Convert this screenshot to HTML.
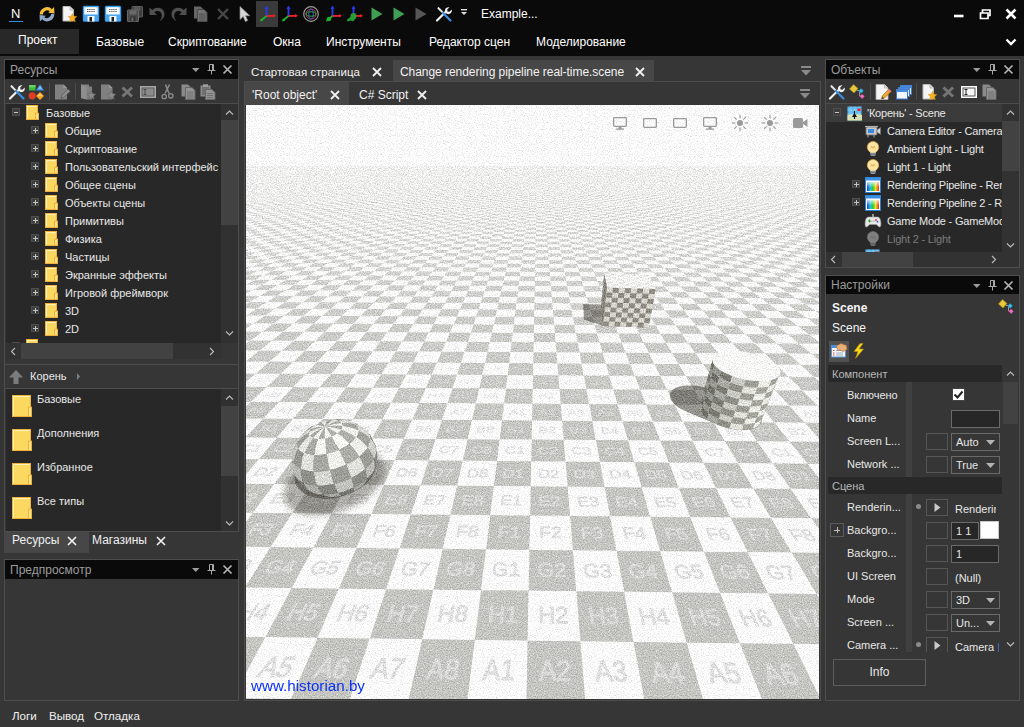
<!DOCTYPE html><html><head><meta charset="utf-8"><title>NeoAxis</title><style>
*{box-sizing:border-box;margin:0;padding:0}
html,body{width:1024px;height:727px;overflow:hidden;background:#363636}
body{position:relative;font-family:"Liberation Sans",sans-serif;font-size:11px;color:#e8e8e8;line-height:1}
.a{position:absolute}
.t{position:absolute;white-space:nowrap;line-height:14px;height:14px}
.s12{font-size:12px}
.panel{position:absolute;border:1px solid #4d4d4d;background:#363636}
.ptitle{position:absolute;left:0;right:0;top:0;height:19px;background:#0a0a0a;color:#9c9c9c;font-size:12px}
.ptitle .t{left:5px;top:2px}
.dark{background:#282828}
.hl{position:absolute;height:1px;background:#4d4d4d}
.vl{position:absolute;width:1px;background:#4d4d4d}
.fold{position:absolute;width:14px;height:16px}
.exp{position:absolute;width:8px;height:8px;border:1px solid #4e4e4e;background:#3d3d3d}
.exp:before{content:"";position:absolute;left:1px;top:2.500px;width:4px;height:1px;background:#c4c4c4}
.exp.plus:before{left:.5px;width:5px}
.exp.plus:after{content:"";position:absolute;left:2.500px;top:.5px;width:1px;height:5px;background:#c4c4c4}
.sb{position:absolute;background:#363636}
.thumb{position:absolute;background:#424242}
svg{position:absolute;overflow:visible}
.box{position:absolute;border:1px solid #565656;background:#363636}
.tb{position:absolute;border:1px solid #6a6a6a;background:#272727}
</style></head><body>
<svg width="0" height="0" style="left:0;top:0"><defs><linearGradient id="rb" x1="0" y1="0" x2="1" y2="0"><stop offset="0" stop-color="#2438e8"/><stop offset=".28" stop-color="#20c8d0"/><stop offset=".5" stop-color="#30c838"/><stop offset=".72" stop-color="#f0e020"/><stop offset="1" stop-color="#e82828"/></linearGradient><linearGradient id="wb" x1="0" y1="0" x2="0" y2="1"><stop offset="0" stop-color="#fff" stop-opacity=".75"/><stop offset=".6" stop-color="#fff" stop-opacity="0"/></linearGradient></defs></svg>
<div class="a" style="left:0;top:0;width:1024px;height:56px;background:#0a0a0a"></div>
<div class="t" style="left:11px;top:6px;font-size:13px;color:#fff;line-height:15px;height:15px">N</div>
<div class="a" style="left:9px;top:21px;width:14px;height:1px;background:#2f8de4"></div>
<div class="a" style="left:256px;top:1px;width:22px;height:26px;background:#3a3a3a"></div>
<svg style="left:39px;top:6px" width="16" height="16" viewBox="0 0 16 16"><path d="M2.300 8.500a5.700 5.700 0 0 1 9.800-4" stroke="#f5bd3a" stroke-width="3.200" fill="none"/><path d="M9.200 6.800l6.300.7-.4-6.500z" fill="#f5bd3a"/><path d="M13.700 8a5.700 5.700 0 0 1-9.800 4" stroke="#8fa9c8" stroke-width="3.200" fill="none"/><path d="M6.800 9.700l-6.300-.7.400 6.500z" fill="#8fa9c8"/></svg>
<svg style="left:61px;top:6px" width="16" height="16" viewBox="0 0 16 16"><path d="M2 .5h7l3.500 3.500v11h-10.500z" fill="#f4f4f4" stroke="#b8b8b8"/><path d="M9 .5v3.500h3.500" fill="#dcdcdc" stroke="#b8b8b8"/><path d="M11.500 7.500l1.300 2.700 3 .4-2.200 2.100.6 3-2.700-1.500-2.700 1.500.6-3-2.200-2.100 3-.4z" fill="#f7b322" stroke="#d98c10" stroke-width=".5"/></svg>
<svg style="left:83px;top:6px" width="16" height="16" viewBox="0 0 16 16"><rect x=".5" y=".5" width="15" height="14.500" rx=".8" fill="#eaf4fd" stroke="#3a9be8" stroke-width="1.400"/><rect x="1" y="8.500" width="14" height="6.500" fill="#4aa6ee"/><rect x="3" y="1.500" width="10" height="6" fill="#ffffff"/><path d="M4 3.500h8M4 5.500h8" stroke="#666" stroke-width="1" stroke-dasharray="1.500 .6"/><rect x="4.500" y="10" width="7" height="5.500" fill="#f4f8fc"/><rect x="6.500" y="11" width="2.500" height="4.500" fill="#222"/></svg>
<svg style="left:105px;top:6px" width="16" height="16" viewBox="0 0 16 16"><rect x=".5" y=".5" width="15" height="14.500" rx=".8" fill="#eaf4fd" stroke="#3a9be8" stroke-width="1.400"/><rect x="1" y="8.500" width="14" height="6.500" fill="#4aa6ee"/><rect x="3" y="1.500" width="10" height="6" fill="#ffffff"/><path d="M4 3.500h8M4 5.500h8" stroke="#666" stroke-width="1" stroke-dasharray="1.500 .6"/><rect x="4.500" y="10" width="7" height="5.500" fill="#f4f8fc"/><rect x="6.500" y="11" width="2.500" height="4.500" fill="#222"/></svg>
<svg style="left:127px;top:6px" width="16" height="16" viewBox="0 0 16 16"><rect x="5" y=".5" width="10.500" height="10.500" rx=".6" fill="#3e3e3e" stroke="#5e5e5e"/><rect x="7" y="1" width="6.500" height="3.500" fill="#585858"/><rect x=".5" y="4" width="11" height="11.500" rx=".6" fill="#4a4a4a" stroke="#6a6a6a"/><rect x="2.500" y="4.500" width="7" height="4" fill="#6a6a6a"/><rect x="3.500" y="10.500" width="5" height="5" fill="#2e2e2e"/><rect x="4.500" y="11.500" width="1.800" height="4" fill="#6a6a6a"/></svg>
<svg style="left:149px;top:6px" width="16" height="16" viewBox="0 0 16 16"><path d="M.5 1.500v7.500h7.500l-2.700-2.700c1-.8 2-1.200 3.200-1.200 2.700 0 4.300 2.100 4.300 4.600 0 2.200-.9 4-2.600 5.600 3.400-1.400 5.300-4 5.300-7 0-3.800-2.900-6.500-6.700-6.500-2.100 0-4 .8-5.500 2.200z" fill="#505050"/></svg>
<svg style="left:171px;top:6px" width="16" height="16" viewBox="0 0 16 16"><g transform="translate(16,0) scale(-1,1)"><path d="M.5 1.500v7.500h7.500l-2.700-2.700c1-.8 2-1.200 3.200-1.200 2.700 0 4.300 2.100 4.300 4.600 0 2.200-.9 4-2.600 5.600 3.400-1.400 5.300-4 5.300-7 0-3.800-2.900-6.500-6.700-6.500-2.100 0-4 .8-5.500 2.200z" fill="#505050"/></g></svg>
<svg style="left:193px;top:6px" width="16" height="16" viewBox="0 0 16 16"><path d="M1 .5h6.500l2.500 2.500v9.500h-9z" fill="#666"/><path d="M4.500 3.500h6.500l3 3v9h-9.500z" fill="#747474" stroke="#4a4a4a"/><path d="M6 8h6.500M6 10h6.500M6 12h6.500M6 14h6.500" stroke="#4c4c4c" stroke-width=".9"/></svg>
<svg style="left:215px;top:6px" width="16" height="16" viewBox="0 0 16 16"><path d="M3 3l10 10M13 3l-10 10" stroke="#484848" stroke-width="2.400"/></svg>
<svg style="left:237px;top:6px" width="16" height="16" viewBox="0 0 16 16"><path d="M3 .5v13l3.200-3 2.200 5 2.300-1-2.200-4.800h4.300z" fill="#d6d6d6" stroke="#8c8c8c" stroke-width=".7"/></svg>
<svg style="left:260px;top:6px" width="16" height="16" viewBox="0 0 16 16"><path d="M6.500 10v-9.500" stroke="#2a3cf0" stroke-width="1.800"/><path d="M6.500 10l8 -.2" stroke="#e8202a" stroke-width="1.800"/><path d="M6.500 10l-5.500 4.500" stroke="#20b030" stroke-width="1.800"/><path d="M6.500 0l-2 3h4z" fill="#2a3cf0"/><path d="M16 9.700l-3-1.800v3.600z" fill="#e8202a"/><path d="M0 15.500l1-3.300 2.300 2.300z" fill="#20b030"/></svg>
<svg style="left:282px;top:6px" width="16" height="16" viewBox="0 0 16 16"><path d="M6.500 10v-9.500" stroke="#2a3cf0" stroke-width="1.800"/><path d="M6.500 10l8 -.2" stroke="#e8202a" stroke-width="1.800"/><path d="M6.500 10l-5.500 4.500" stroke="#20b030" stroke-width="1.800"/><path d="M6.500 0l-2 3h4z" fill="#2a3cf0"/><path d="M16 9.700l-3-1.800v3.600z" fill="#e8202a"/><path d="M0 15.500l1-3.300 2.300 2.300z" fill="#20b030"/></svg>
<svg style="left:303px;top:6px" width="16" height="16" viewBox="0 0 16 16"><circle cx="8" cy="8" r="7.300" fill="none" stroke="#9a9a9a" stroke-width="1.200"/><circle cx="8" cy="8" r="5" fill="none" stroke="#c03040" stroke-width="1"/><ellipse cx="8" cy="8" rx="2.200" ry="5" fill="none" stroke="#3058d8" stroke-width="1"/><ellipse cx="8" cy="8" rx="5" ry="2.200" fill="none" stroke="#30a040" stroke-width="1"/></svg>
<svg style="left:326px;top:6px" width="16" height="16" viewBox="0 0 16 16"><path d="M6.500 10v-9.500" stroke="#2a3cf0" stroke-width="1.800"/><path d="M6.500 10l8 -.2" stroke="#e8202a" stroke-width="1.800"/><path d="M6.500 10l-5.500 4.500" stroke="#20b030" stroke-width="1.800"/><path d="M6.500 0l-2 3h4z" fill="#2a3cf0"/><path d="M16 9.700l-3-1.800v3.600z" fill="#e8202a"/><path d="M0 15.500l1-3.300 2.300 2.300z" fill="#20b030"/><circle cx="3" cy="13" r="2.200" fill="#20b030"/></svg>
<svg style="left:347px;top:6px" width="16" height="16" viewBox="0 0 16 16"><path d="M6.500 10v-9.500" stroke="#2a3cf0" stroke-width="1.800"/><path d="M6.500 10l8 -.2" stroke="#e8202a" stroke-width="1.800"/><path d="M6.500 10l-5.500 4.500" stroke="#20b030" stroke-width="1.800"/><path d="M6.500 0l-2 3h4z" fill="#2a3cf0"/><path d="M16 9.700l-3-1.800v3.600z" fill="#e8202a"/><path d="M0 15.500l1-3.300 2.300 2.300z" fill="#20b030"/><path d="M1 13.500l4-4 4 2.500-3 3.500z" fill="#20a030"/><circle cx="6.500" cy="10" r="3" fill="#2c9c38"/></svg>
<svg style="left:369px;top:6px" width="16" height="16" viewBox="0 0 16 16"><path d="M2.500 1.500l11 6.500-11 6.500z" fill="#3fa055"/></svg>
<svg style="left:391px;top:6px" width="16" height="16" viewBox="0 0 16 16"><path d="M2.500 1.500l11 6.500-11 6.500z" fill="#3fa055"/></svg>
<svg style="left:413px;top:6px" width="16" height="16" viewBox="0 0 16 16"><path d="M2.500 1.500l11 6.500-11 6.500z" fill="#565656"/></svg>
<svg style="left:436px;top:6px" width="16" height="16" viewBox="0 0 16 16"><path d="M1 14.500l8-8" stroke="#f2f2f2" stroke-width="2.200" stroke-linecap="round"/><path d="M9.500 6.500a3.300 3.300 0 0 1 1-4.800c1-.6 2.200-.7 3-.4l-2.300 2.300.3 1.900 1.900.3 2.300-2.300c.3 1 .2 2-.4 3a3.300 3.300 0 0 1-4.800 1z" fill="#f2f2f2"/><path d="M2 1l1 .2 4.500 4.800-1.300 1.300-4.800-4.500z" fill="#e8e8e8"/><path d="M7 7l7.500 7.500" stroke="#3b8fe0" stroke-width="2.200" stroke-linecap="round"/></svg>
<svg style="left:459px;top:8px" width="10" height="10" viewBox="0 0 10 10"><rect x="2" y="1" width="6" height="1.4" fill="#e0e0e0"/><path d="M2 4h6l-3 3z" fill="#e0e0e0"/></svg>
<div class="t s12" style="left:481px;top:7px;color:#fff">Example...</div>
<svg style="left:950px;top:6px" width="70" height="16" viewBox="0 0 70 16"><g stroke="#ffffff" fill="none"><path d="M4 10h9.500" stroke-width="2.600"/><path d="M30.500 7h7.500v5.500h-7.500zM32.500 6.500v-2.500h7.500v5.500h-2" stroke-width="1.700"/><path d="M56.500 3.500l9 9M65.500 3.500l-9 9" stroke-width="2.500"/></g></svg>
<div class="a" style="left:0;top:29px;width:79px;height:25px;background:#282828"></div>
<div class="t s12" style="left:18px;top:33px;color:#fff">Проект</div>
<div class="t s12" style="left:96px;top:35px;color:#fff">Базовые</div>
<div class="t s12" style="left:168px;top:35px;color:#fff">Скриптование</div>
<div class="t s12" style="left:273px;top:35px;color:#fff">Окна</div>
<div class="t s12" style="left:326px;top:35px;color:#fff">Инструменты</div>
<div class="t s12" style="left:429px;top:35px;color:#fff">Редактор сцен</div>
<div class="t s12" style="left:536px;top:35px;color:#fff">Моделирование</div>
<svg style="left:1005px;top:37px" width="12" height="10" viewBox="0 0 12 10"><path d="M1.500 2.500l4.500 4.500 4.500-4.500" stroke="#ffffff" stroke-width="2.300" fill="none"/></svg>
<div class="t" style="left:12px;top:708.500px;color:#f0f0f0;font-size:11.600px">Логи</div>
<div class="t" style="left:49px;top:708.500px;color:#f0f0f0;font-size:11.600px">Вывод</div>
<div class="t" style="left:94px;top:708.500px;color:#f0f0f0;font-size:11.600px">Отладка</div>
<div class="panel" style="left:4px;top:59px;width:235px;height:473px">
<div class="ptitle"><div class="t" style="top:3px">Ресурсы</div><svg style="left:183px;top:0" width="46" height="19" viewBox="0 0 46 19"><path d="M4 8h7.500l-3.750 4z" fill="#9c9c9c"/><path d="M21.500 4.500h4v6h-4zM24.500 4.500v6M19.500 10.500h8M23.500 10.500v4" stroke="#a8a8a8" stroke-width="1" fill="none"/><path d="M35.500 5.500l8 8M43.500 5.500l-8 8" stroke="#b4b4b4" stroke-width="1.700"/></svg></div>
<div class="a" style="left:1px;top:0;width:232px;height:471px">
<svg style="left:3px;top:24px" width="16" height="16" viewBox="0 0 16 16"><path d="M1 14.500l8-8" stroke="#f2f2f2" stroke-width="2.200" stroke-linecap="round"/><path d="M9.500 6.500a3.300 3.300 0 0 1 1-4.800c1-.6 2.200-.7 3-.4l-2.300 2.300.3 1.900 1.900.3 2.300-2.300c.3 1 .2 2-.4 3a3.300 3.300 0 0 1-4.800 1z" fill="#f2f2f2"/><path d="M2 1l1 .2 4.500 4.800-1.300 1.300-4.800-4.500z" fill="#e8e8e8"/><path d="M7 7l7.500 7.500" stroke="#3b8fe0" stroke-width="2.200" stroke-linecap="round"/></svg>
<svg style="left:22px;top:24px" width="16" height="16" viewBox="0 0 16 16"><rect x="1" y="1" width="6.500" height="5.500" rx=".5" fill="#3dbb3d"/><rect x="1" y="1" width="6.500" height="2.500" fill="#66d466"/><path d="M12 .5l4 6h-8z" fill="#3d96ea"/><path d="M12 1.500l2.300 3.500h-4.600z" fill="#7dbcf4"/><circle cx="4.200" cy="11.800" r="3.600" fill="#e03c24"/><path d="M12 8l4 4-4 4-4-4z" fill="#f5a623"/><path d="M12 9.300l2.700 2.700h-5.400z" fill="#ffc860"/></svg>
<svg style="left:48px;top:24px" width="16" height="16" viewBox="0 0 16 16"><path d="M1 .5h8.500l3.500 3.500v11.500h-12z" fill="#808080"/><path d="M9.500 .5v3.500h3.500" fill="#9a9a9a"/><path d="M7 14.500l1-3.500 6-6 2.200 2.200-6 6z" fill="#8c8c8c" stroke="#5a5a5a" stroke-width=".8"/></svg>
<svg style="left:74px;top:24px" width="16" height="16" viewBox="0 0 16 16"><path d="M1 .5h8v2h3v13h-5.500l-5.500-1.500z" fill="#808080"/><path d="M1 .5l5.500 2v13l-5.500-1.500z" fill="#8e8e8e"/><path d="M11.500 7l1.300 2.700 3 .4-2.200 2.100.6 3-2.700-1.500-2.700 1.500.6-3-2.200-2.100 3-.4z" fill="#8a8a8a" stroke="#5c5c5c" stroke-width=".5"/></svg>
<svg style="left:94px;top:24px" width="16" height="16" viewBox="0 0 16 16"><path d="M1 .5h8l3.500 3.500v11.500h-11.500z" fill="#808080"/><path d="M9 .5v3.500h3.500" fill="#9a9a9a"/><path d="M11.500 7l1.300 2.700 3 .4-2.200 2.100.6 3-2.700-1.500-2.700 1.500.6-3-2.200-2.100 3-.4z" fill="#8a8a8a" stroke="#5c5c5c" stroke-width=".5"/></svg>
<svg style="left:114px;top:24px" width="16" height="16" viewBox="0 0 16 16"><path d="M2.500 3.500l9.500 9M12 3.500l-9.500 9" stroke="#757575" stroke-width="3"/></svg>
<svg style="left:134px;top:24px" width="16" height="16" viewBox="0 0 16 16"><rect x=".7" y="2.700" width="14.600" height="10.600" fill="#8a8a8a" stroke="#a8a8a8" stroke-width="1.400"/><rect x="2" y="4" width="12" height="8" fill="none" stroke="#555" stroke-width=".7"/><path d="M3.500 5.500h3M3.500 10.500h3M5 5.500v5" stroke="#444" stroke-width=".9" fill="none"/></svg>
<svg style="left:154px;top:24px" width="16" height="16" viewBox="0 0 16 16"><path d="M5.500 .5l3.500 9M9.500 .5l-4.500 9" stroke="#8c8c8c" stroke-width="1.500" fill="none"/><circle cx="4.200" cy="12.500" r="2.200" fill="none" stroke="#8c8c8c" stroke-width="1.300"/><circle cx="10.800" cy="11.800" r="2.200" fill="none" stroke="#8c8c8c" stroke-width="1.300"/></svg>
<svg style="left:175px;top:24px" width="16" height="16" viewBox="0 0 16 16"><path d="M.5 .5h6.500l2.500 2.500v9.500h-9z" fill="#8a8a8a"/><path d="M4.500 3.500h6.500l3 3v9h-9.500z" fill="#949494" stroke="#666"/><path d="M6 8h6.500M6 10h6.500M6 12h6.500M6 14h6.500" stroke="#6a6a6a" stroke-width=".9"/></svg>
<svg style="left:194px;top:24px" width="16" height="16" viewBox="0 0 16 16"><rect x=".5" y="1.500" width="10" height="11" fill="#8a8a8a"/><rect x="3" y=".3" width="5" height="2.500" fill="#a0a0a0"/><rect x="2" y="3" width="7" height="8" fill="#707070"/><path d="M5.500 5.500h6.500l3 3v7h-9.500z" fill="#949494" stroke="#666"/><path d="M7 9.500h6M7 11.500h6M7 13.500h6" stroke="#6a6a6a" stroke-width=".9"/></svg>
<div class="a" style="left:43px;top:23px;width:1px;height:17px;background:#4a4a4a"></div>
<div class="a" style="left:69px;top:23px;width:1px;height:17px;background:#4a4a4a"></div>
<div class="hl" style="left:-1px;right:0;top:43px"></div>
<div class="a dark" style="left:0;top:44px;width:215px;height:239px;overflow:hidden">
<div class="exp" style="left:6px;top:4px"></div>
<svg style="left:20px;top:1px" width="13" height="15" viewBox="0 0 13 15"><rect x=".5" y=".5" width="11" height="14" fill="#fbd860" stroke="#eeb23c"/><path d="M1.500 13.5v-12h9" stroke="#fff3c0" fill="none"/><rect x="9.5" y="8.2" width="3" height="6.2" fill="#fce48c" stroke="#eeb23c"/></svg>
<div class="t" style="left:40px;top:2px">Базовые</div>
<div class="exp plus" style="left:25px;top:22px"></div>
<svg style="left:39px;top:19px" width="13" height="15" viewBox="0 0 13 15"><rect x=".5" y=".5" width="11" height="14" fill="#fbd860" stroke="#eeb23c"/><path d="M1.500 13.5v-12h9" stroke="#fff3c0" fill="none"/><rect x="9.5" y="8.2" width="3" height="6.2" fill="#fce48c" stroke="#eeb23c"/></svg>
<div class="t" style="left:59px;top:20px">Общие</div>
<div class="exp plus" style="left:25px;top:40px"></div>
<svg style="left:39px;top:37px" width="13" height="15" viewBox="0 0 13 15"><rect x=".5" y=".5" width="11" height="14" fill="#fbd860" stroke="#eeb23c"/><path d="M1.500 13.5v-12h9" stroke="#fff3c0" fill="none"/><rect x="9.5" y="8.2" width="3" height="6.2" fill="#fce48c" stroke="#eeb23c"/></svg>
<div class="t" style="left:59px;top:38px">Скриптование</div>
<div class="exp plus" style="left:25px;top:58px"></div>
<svg style="left:39px;top:55px" width="13" height="15" viewBox="0 0 13 15"><rect x=".5" y=".5" width="11" height="14" fill="#fbd860" stroke="#eeb23c"/><path d="M1.500 13.5v-12h9" stroke="#fff3c0" fill="none"/><rect x="9.5" y="8.2" width="3" height="6.2" fill="#fce48c" stroke="#eeb23c"/></svg>
<div class="t" style="left:59px;top:56px">Пользовательский интерфейс</div>
<div class="exp plus" style="left:25px;top:76px"></div>
<svg style="left:39px;top:73px" width="13" height="15" viewBox="0 0 13 15"><rect x=".5" y=".5" width="11" height="14" fill="#fbd860" stroke="#eeb23c"/><path d="M1.500 13.5v-12h9" stroke="#fff3c0" fill="none"/><rect x="9.5" y="8.2" width="3" height="6.2" fill="#fce48c" stroke="#eeb23c"/></svg>
<div class="t" style="left:59px;top:74px">Общее сцены</div>
<div class="exp plus" style="left:25px;top:94px"></div>
<svg style="left:39px;top:91px" width="13" height="15" viewBox="0 0 13 15"><rect x=".5" y=".5" width="11" height="14" fill="#fbd860" stroke="#eeb23c"/><path d="M1.500 13.5v-12h9" stroke="#fff3c0" fill="none"/><rect x="9.5" y="8.2" width="3" height="6.2" fill="#fce48c" stroke="#eeb23c"/></svg>
<div class="t" style="left:59px;top:92px">Объекты сцены</div>
<div class="exp plus" style="left:25px;top:112px"></div>
<svg style="left:39px;top:109px" width="13" height="15" viewBox="0 0 13 15"><rect x=".5" y=".5" width="11" height="14" fill="#fbd860" stroke="#eeb23c"/><path d="M1.500 13.5v-12h9" stroke="#fff3c0" fill="none"/><rect x="9.5" y="8.2" width="3" height="6.2" fill="#fce48c" stroke="#eeb23c"/></svg>
<div class="t" style="left:59px;top:110px">Примитивы</div>
<div class="exp plus" style="left:25px;top:130px"></div>
<svg style="left:39px;top:127px" width="13" height="15" viewBox="0 0 13 15"><rect x=".5" y=".5" width="11" height="14" fill="#fbd860" stroke="#eeb23c"/><path d="M1.500 13.5v-12h9" stroke="#fff3c0" fill="none"/><rect x="9.5" y="8.2" width="3" height="6.2" fill="#fce48c" stroke="#eeb23c"/></svg>
<div class="t" style="left:59px;top:128px">Физика</div>
<div class="exp plus" style="left:25px;top:148px"></div>
<svg style="left:39px;top:145px" width="13" height="15" viewBox="0 0 13 15"><rect x=".5" y=".5" width="11" height="14" fill="#fbd860" stroke="#eeb23c"/><path d="M1.500 13.5v-12h9" stroke="#fff3c0" fill="none"/><rect x="9.5" y="8.2" width="3" height="6.2" fill="#fce48c" stroke="#eeb23c"/></svg>
<div class="t" style="left:59px;top:146px">Частицы</div>
<div class="exp plus" style="left:25px;top:166px"></div>
<svg style="left:39px;top:163px" width="13" height="15" viewBox="0 0 13 15"><rect x=".5" y=".5" width="11" height="14" fill="#fbd860" stroke="#eeb23c"/><path d="M1.500 13.5v-12h9" stroke="#fff3c0" fill="none"/><rect x="9.5" y="8.2" width="3" height="6.2" fill="#fce48c" stroke="#eeb23c"/></svg>
<div class="t" style="left:59px;top:164px">Экранные эффекты</div>
<div class="exp plus" style="left:25px;top:184px"></div>
<svg style="left:39px;top:181px" width="13" height="15" viewBox="0 0 13 15"><rect x=".5" y=".5" width="11" height="14" fill="#fbd860" stroke="#eeb23c"/><path d="M1.500 13.5v-12h9" stroke="#fff3c0" fill="none"/><rect x="9.5" y="8.2" width="3" height="6.2" fill="#fce48c" stroke="#eeb23c"/></svg>
<div class="t" style="left:59px;top:182px">Игровой фреймворк</div>
<div class="exp plus" style="left:25px;top:202px"></div>
<svg style="left:39px;top:199px" width="13" height="15" viewBox="0 0 13 15"><rect x=".5" y=".5" width="11" height="14" fill="#fbd860" stroke="#eeb23c"/><path d="M1.500 13.5v-12h9" stroke="#fff3c0" fill="none"/><rect x="9.5" y="8.2" width="3" height="6.2" fill="#fce48c" stroke="#eeb23c"/></svg>
<div class="t" style="left:59px;top:200px">3D</div>
<div class="exp plus" style="left:25px;top:220px"></div>
<svg style="left:39px;top:217px" width="13" height="15" viewBox="0 0 13 15"><rect x=".5" y=".5" width="11" height="14" fill="#fbd860" stroke="#eeb23c"/><path d="M1.500 13.5v-12h9" stroke="#fff3c0" fill="none"/><rect x="9.5" y="8.2" width="3" height="6.2" fill="#fce48c" stroke="#eeb23c"/></svg>
<div class="t" style="left:59px;top:218px">2D</div>
<div class="exp" style="left:6px;top:238px"></div>
<svg style="left:20px;top:235px" width="13" height="15" viewBox="0 0 13 15"><rect x=".5" y=".5" width="11" height="14" fill="#fbd860" stroke="#eeb23c"/><path d="M1.500 13.5v-12h9" stroke="#fff3c0" fill="none"/><rect x="9.5" y="8.2" width="3" height="6.2" fill="#fce48c" stroke="#eeb23c"/></svg>
<div class="t" style="left:40px;top:236px"></div>
</div>
<div class="sb" style="left:215px;top:44px;width:17px;height:239px;background:#313131"><div class="thumb" style="left:0;top:16px;width:17px;height:105px"></div><svg style="left:4px;top:4px" width="9" height="9" viewBox="0 0 9 9"><path d="M1 6.500l3.500-3.500 3.500 3.500" stroke="#bdbdbd" stroke-width="1.100" fill="none"/></svg><svg style="left:4px;top:225px" width="9" height="9" viewBox="0 0 9 9"><path d="M1 2.500l3.500 3.500 3.500-3.500" stroke="#bdbdbd" stroke-width="1.100" fill="none"/></svg></div>
<div class="sb" style="left:0;top:283px;width:215px;height:16px;background:#323232"><div class="thumb" style="left:15px;top:0;width:152px;height:16px"></div><svg style="left:3px;top:4px" width="9" height="9" viewBox="0 0 9 9"><path d="M6 1l-3.500 3.500 3.500 3.500" stroke="#bdbdbd" stroke-width="1.100" fill="none"/></svg><svg style="left:201px;top:4px" width="9" height="9" viewBox="0 0 9 9"><path d="M3 1l3.500 3.500-3.500 3.500" stroke="#bdbdbd" stroke-width="1.100" fill="none"/></svg></div>
<div class="hl" style="left:-1px;right:0;top:304px"></div>
<svg style="left:2px;top:309px" width="16" height="16" viewBox="0 0 16 16"><path d="M8 1l7 7.500h-4.500v6.500h-5v-6.500h-4.500z" fill="#7c7c7c"/></svg>
<div class="t" style="left:24px;top:309px">Корень</div>
<svg style="left:70px;top:313px" width="5" height="7" viewBox="0 0 5 7"><path d="M1 0l3 3.500-3 3.500z" fill="#7a8088"/></svg>
<div class="hl" style="left:-1px;right:0;top:328px"></div>
<div class="a dark" style="left:0;top:329px;width:215px;height:142px;overflow:hidden">
<svg style="left:6px;top:6px" width="20" height="22" viewBox="0 0 20 22"><rect x=".5" y=".5" width="18" height="21" fill="#fbd860" stroke="#eeb23c"/><path d="M1.500 20.5v-19h16" stroke="#fff3c0" fill="none"/><rect x="16.5" y="12.1" width="3" height="9.4" fill="#fce48c" stroke="#eeb23c"/></svg>
<div class="t" style="left:31px;top:3px">Базовые</div>
<svg style="left:6px;top:40px" width="20" height="22" viewBox="0 0 20 22"><rect x=".5" y=".5" width="18" height="21" fill="#fbd860" stroke="#eeb23c"/><path d="M1.500 20.5v-19h16" stroke="#fff3c0" fill="none"/><rect x="16.5" y="12.1" width="3" height="9.4" fill="#fce48c" stroke="#eeb23c"/></svg>
<div class="t" style="left:31px;top:37px">Дополнения</div>
<svg style="left:6px;top:74px" width="20" height="22" viewBox="0 0 20 22"><rect x=".5" y=".5" width="18" height="21" fill="#fbd860" stroke="#eeb23c"/><path d="M1.500 20.5v-19h16" stroke="#fff3c0" fill="none"/><rect x="16.5" y="12.1" width="3" height="9.4" fill="#fce48c" stroke="#eeb23c"/></svg>
<div class="t" style="left:31px;top:71px">Избранное</div>
<svg style="left:6px;top:108px" width="20" height="22" viewBox="0 0 20 22"><rect x=".5" y=".5" width="18" height="21" fill="#fbd860" stroke="#eeb23c"/><path d="M1.500 20.5v-19h16" stroke="#fff3c0" fill="none"/><rect x="16.5" y="12.1" width="3" height="9.4" fill="#fce48c" stroke="#eeb23c"/></svg>
<div class="t" style="left:31px;top:105px">Все типы</div>
<svg style="left:6px;top:142px" width="20" height="22" viewBox="0 0 20 22"><rect x=".5" y=".5" width="18" height="21" fill="#fbd860" stroke="#eeb23c"/><path d="M1.500 20.5v-19h16" stroke="#fff3c0" fill="none"/><rect x="16.5" y="12.1" width="3" height="9.4" fill="#fce48c" stroke="#eeb23c"/></svg>
<div class="t" style="left:31px;top:139px"></div>
</div>
<div class="sb" style="left:215px;top:329px;width:17px;height:142px;background:#313131"><div class="thumb" style="left:0;top:17px;width:17px;height:70px"></div><svg style="left:4px;top:4px" width="9" height="9" viewBox="0 0 9 9"><path d="M1 6.500l3.500-3.500 3.500 3.500" stroke="#bdbdbd" stroke-width="1.100" fill="none"/></svg><svg style="left:4px;top:130px" width="9" height="9" viewBox="0 0 9 9"><path d="M1 2.500l3.500 3.500 3.500-3.500" stroke="#bdbdbd" stroke-width="1.100" fill="none"/></svg></div>
</div></div>
<div class="a" style="left:4px;top:532px;width:85px;height:21px;background:#474747"></div>
<div class="t s12" style="left:12px;top:533px;color:#f0f0f0">Ресурсы</div><svg style="left:67px;top:536px" width="10" height="10" viewBox="0 0 10 10"><path d="M1 1l8 8M9 1l-8 8" stroke="#f0f0f0" stroke-width="1.700"/></svg>
<div class="t s12" style="left:92px;top:533px;color:#f0f0f0">Магазины</div><svg style="left:156px;top:536px" width="10" height="10" viewBox="0 0 10 10"><path d="M1 1l8 8M9 1l-8 8" stroke="#f0f0f0" stroke-width="1.700"/></svg>
<div class="panel" style="left:4px;top:559px;width:235px;height:142px">
<div class="ptitle"><div class="t" style="top:3px">Предпросмотр</div><svg style="left:183px;top:0" width="46" height="19" viewBox="0 0 46 19"><path d="M4 8h7.500l-3.750 4z" fill="#9c9c9c"/><path d="M21.500 4.500h4v6h-4zM24.500 4.500v6M19.500 10.500h8M23.500 10.500v4" stroke="#a8a8a8" stroke-width="1" fill="none"/><path d="M35.500 5.500l8 8M43.500 5.500l-8 8" stroke="#b4b4b4" stroke-width="1.700"/></svg></div>
</div>
<div class="a" style="left:393px;top:60px;width:261px;height:22px;background:#474747"></div>
<div class="t" style="left:251px;top:65px;font-size:11.5px;color:#f2f2f2">Стартовая страница</div><svg style="left:372px;top:67px" width="10" height="10" viewBox="0 0 10 10"><path d="M1 1l8 8M9 1l-8 8" stroke="#f2f2f2" stroke-width="1.800"/></svg>
<div class="t s12" style="left:400px;top:65px;color:#f2f2f2;letter-spacing:-.05px">Change rendering pipeline real-time.scene</div><svg style="left:635px;top:67px" width="10" height="10" viewBox="0 0 10 10"><path d="M1 1l8 8M9 1l-8 8" stroke="#f2f2f2" stroke-width="1.800"/></svg>
<svg style="left:801px;top:66px" width="10" height="10" viewBox="0 0 10 10"><rect x="0" y="0" width="10" height="2" fill="#8a8a8a"/><path d="M0 4h10l-5 5.500z" fill="#8a8a8a"/></svg>
<div class="a" style="left:244px;top:81px;width:577px;height:620px;border:1px solid #4d4d4d;background:#363636"></div>
<div class="a" style="left:245px;top:82px;width:104px;height:23px;background:#474747"></div>
<div class="t s12" style="left:252px;top:88px;color:#f2f2f2">'Root object'</div><svg style="left:330px;top:90px" width="10" height="10" viewBox="0 0 10 10"><path d="M1 1l8 8M9 1l-8 8" stroke="#f2f2f2" stroke-width="1.800"/></svg>
<div class="t s12" style="left:359px;top:88px;color:#f2f2f2">C# Script</div><svg style="left:417px;top:90px" width="10" height="10" viewBox="0 0 10 10"><path d="M1 1l8 8M9 1l-8 8" stroke="#f2f2f2" stroke-width="1.800"/></svg>
<svg style="left:800px;top:89px" width="10" height="10" viewBox="0 0 10 10"><rect x="0" y="0" width="10" height="2" fill="#8a8a8a"/><path d="M0 4h10l-5 5.500z" fill="#8a8a8a"/></svg>
<svg width="573" height="594" viewBox="246 105 573 594" style="left:246px;top:105px;overflow:hidden"><defs><filter id="nz" x="246" y="105" width="573" height="594" filterUnits="userSpaceOnUse" color-interpolation-filters="sRGB"><feTurbulence type="fractalNoise" baseFrequency="0.85" numOctaves="2" seed="7" result="t"/><feColorMatrix in="t" type="matrix" values="1 0 0 0 0  1 0 0 0 0  1 0 0 0 0  0 0 0 0 1" result="g"/><feComposite in="SourceGraphic" in2="g" operator="arithmetic" k1="0" k2="1" k3="0.42" k4="-0.219"/></filter><filter id="bl" x="246" y="105" width="573" height="594" filterUnits="userSpaceOnUse"><feGaussianBlur stdDeviation=".55"/></filter><linearGradient id="fade" x1="0" y1="165.7" x2="0" y2="440" gradientUnits="userSpaceOnUse"><stop offset="0" stop-color="#fff" stop-opacity=".55"/><stop offset=".2" stop-color="#fff" stop-opacity=".36"/><stop offset=".55" stop-color="#fff" stop-opacity=".14"/><stop offset="1" stop-color="#fff" stop-opacity="0"/></linearGradient><clipPath id="fl"><rect x="246" y="165.7" width="573" height="533.3"/></clipPath></defs><g filter="url(#nz)"><rect x="246" y="105" width="573" height="594" fill="#ffffff"/><g clip-path="url(#fl)"><rect x="246" y="165.7" width="573" height="0.3" fill="#dededc"/><clipPath id="rE"><path d="M108.82 774.39L963.85 788.42L911.80 707.89L160.31 697.05ZM132.49 635.40L939.52 645.78L900.02 595.00L171.66 586.55ZM147.76 545.71L923.84 553.91L892.09 518.99L179.31 512.07ZM158.43 483.03L912.91 489.81L886.38 464.32L184.81 458.47ZM166.30 436.77L904.84 442.53L882.08 423.12L188.97 418.04ZM172.35 401.22L898.65 406.23L878.72 390.95L192.21 386.47ZM177.15 373.04L893.74 377.47L876.03 365.13L194.81 361.13ZM181.05 350.16L889.76 354.13L873.82 343.96L196.95 340.34ZM184.27 331.21L886.46 334.81L871.97 326.28L198.73 322.97ZM186.99 315.26L883.69 318.55L870.41 311.29L200.24 308.25ZM189.30 301.65L881.32 304.68L869.07 298.43L201.54 295.62ZM191.30 289.90L879.28 292.70L867.90 287.27L202.67 284.65ZM193.05 279.65L877.49 282.26L866.88 277.49L203.65 275.04ZM194.58 270.64L875.93 273.08L865.98 268.85L204.53 266.56ZM195.94 262.64L874.54 264.93L865.18 261.17L205.30 259.01ZM197.16 255.51L873.30 257.67L864.46 254.29L206.00 252.24ZM198.25 249.10L872.19 251.14L863.82 248.10L206.62 246.15ZM199.24 243.31L871.18 245.25L863.23 242.49L207.19 240.64ZM200.13 238.06L870.27 239.90L862.70 237.39L207.70 235.63ZM200.95 233.27L869.44 235.02L862.21 232.73L208.17 231.04ZM201.69 228.88L868.67 230.56L861.77 228.45L208.60 226.84ZM202.38 224.85L867.97 226.46L861.36 224.52L209.00 222.97ZM203.01 221.14L867.33 222.68L860.98 220.89L209.37 219.40ZM203.60 217.70L866.73 219.19L860.63 217.52L209.71 216.09ZM204.14 214.52L866.18 215.94L860.30 214.40L210.02 213.02ZM204.64 211.55L865.67 212.93L860.00 211.49L210.32 210.16ZM205.11 208.79L865.19 210.12L859.71 208.77L210.59 207.49ZM205.55 206.21L864.74 207.49L859.45 206.23L210.85 204.99ZM205.96 203.79L864.32 205.03L859.20 203.84L211.09 202.64ZM206.35 201.51L863.92 202.71L858.96 201.60L211.32 200.44ZM206.72 199.38L863.55 200.54L858.74 199.49L211.53 198.36ZM207.06 197.36L863.20 198.49L858.54 197.50L211.73 196.41ZM207.38 195.46L862.87 196.56L858.34 195.62L211.92 194.56ZM207.69 193.67L862.56 194.73L858.15 193.85L212.10 192.81ZM207.98 191.97L862.27 193.00L857.98 192.16L212.27 191.15ZM208.25 190.35L861.99 191.36L857.81 190.56L212.43 189.58ZM208.51 188.82L861.72 189.80L857.65 189.05L212.58 188.09ZM208.76 187.36L861.47 188.32L857.50 187.60L212.73 186.67ZM209.00 185.98L861.23 186.91L857.36 186.22L212.87 185.31ZM209.22 184.66L861.00 185.57L857.22 184.91L213.00 184.02ZM209.44 183.39L860.78 184.28L857.09 183.66L213.13 182.79ZM209.64 182.19L860.57 183.06L856.97 182.46L213.25 181.61ZM209.84 181.04L860.37 181.89L856.85 181.32L213.37 180.49ZM210.03 179.94L860.18 180.77L856.73 180.22L213.48 179.41ZM210.20 178.88L859.99 179.69L856.62 179.17L213.58 178.37ZM210.38 177.87L859.82 178.66L856.52 178.16L213.68 177.38ZM210.54 176.90L859.65 177.68L856.42 177.19L213.78 176.43ZM210.70 175.96L859.49 176.73L856.32 176.26L213.88 175.51ZM210.85 175.07L859.33 175.81L856.23 175.37L213.97 174.63ZM211.00 174.20L859.18 174.94L856.14 174.51L214.05 173.79ZM211.14 173.37L859.04 174.09L856.05 173.68L214.14 172.97ZM211.28 172.57L858.90 173.28L855.97 172.88L214.22 172.18ZM211.41 171.80L858.77 172.49L855.89 172.11L214.30 171.43ZM211.54 171.06L858.64 171.74L855.81 171.36L214.37 170.70ZM211.66 170.34L858.51 171.00L855.73 170.65L214.44 169.99ZM211.78 169.64L858.39 170.30L855.66 169.95L214.51 169.31ZM211.89 168.97L858.28 169.62L855.59 169.28L214.58 168.65ZM212.00 168.32L858.16 168.96L855.52 168.63L214.65 168.01ZM212.11 167.69L858.05 168.32L855.46 168.00L214.71 167.39ZM212.21 167.09L857.95 167.70L855.39 167.40L214.77 166.79ZM212.31 166.50L857.85 167.10L855.33 166.81L214.83 166.21ZM212.41 165.93L857.75 166.52L855.27 166.24L214.89 165.65Z"/></clipPath><clipPath id="rO"><path d="M122.08 696.50L950.21 708.44L905.27 645.34L166.59 635.84ZM140.86 586.19L930.91 595.36L895.70 553.62L175.82 546.00ZM153.53 511.82L917.93 519.24L889.02 489.59L182.27 483.25ZM162.64 458.28L908.59 464.51L884.09 442.37L187.03 436.93ZM169.51 417.90L901.55 423.26L880.30 406.10L190.68 401.34ZM174.88 386.36L896.06 391.06L877.31 377.37L193.58 373.14ZM179.19 361.04L891.65 365.22L874.87 354.05L195.93 350.24ZM182.73 340.26L888.03 344.03L872.86 334.74L197.88 331.28ZM185.69 322.91L885.02 326.34L871.16 318.49L199.52 315.32ZM188.19 308.20L882.46 311.35L869.72 304.62L200.91 301.70ZM190.34 295.57L880.26 298.48L868.47 292.66L202.12 289.95ZM192.21 284.61L878.36 287.31L867.38 282.22L203.18 279.69ZM193.84 275.01L876.69 277.53L866.42 273.04L204.10 270.67ZM195.28 266.52L875.21 268.89L865.57 264.90L204.92 262.67ZM196.57 258.98L873.90 261.20L864.81 257.64L205.66 255.53ZM197.72 252.22L872.73 254.32L864.13 251.12L206.32 249.12ZM198.76 246.13L871.67 248.12L863.52 245.23L206.91 243.33ZM199.69 240.62L870.71 242.51L862.96 239.88L207.45 238.08ZM200.55 235.61L869.84 237.41L862.45 235.01L207.94 233.28ZM201.33 231.03L869.05 232.75L861.98 230.55L208.39 228.90ZM202.04 226.83L868.32 228.47L861.56 226.45L208.81 224.87ZM202.70 222.96L867.65 224.54L861.16 222.67L209.19 221.15ZM203.31 219.39L867.03 220.90L860.80 219.17L209.54 217.72ZM203.87 216.08L866.45 217.54L860.46 215.93L209.87 214.53ZM204.39 213.01L865.92 214.41L860.14 212.92L210.17 211.57ZM204.88 210.15L865.42 211.50L859.85 210.11L210.46 208.80ZM205.34 207.48L864.96 208.78L859.58 207.48L210.72 206.22ZM205.76 204.98L864.52 206.24L859.32 205.02L210.97 203.80ZM206.16 202.63L864.12 203.85L859.08 202.71L211.20 201.52ZM206.54 200.43L863.73 201.61L858.85 200.53L211.42 199.39ZM206.89 198.36L863.37 199.50L858.64 198.48L211.63 197.37ZM207.22 196.40L863.03 197.51L858.44 196.55L211.83 195.47ZM207.54 194.55L862.71 195.63L858.25 194.72L212.01 193.67ZM207.83 192.80L862.41 193.85L858.07 192.99L212.19 191.97ZM208.12 191.15L862.12 192.17L857.89 191.35L212.35 190.36ZM208.38 189.58L861.85 190.57L857.73 189.80L212.51 188.83ZM208.64 188.08L861.59 189.05L857.58 188.31L212.66 187.37ZM208.88 186.66L861.34 187.61L857.43 186.90L212.80 185.98ZM209.11 185.31L861.11 186.23L857.29 185.56L212.94 184.66ZM209.33 184.02L860.89 184.92L857.16 184.28L213.07 183.40ZM209.54 182.79L860.67 183.66L857.03 183.05L213.19 182.20ZM209.74 181.61L860.47 182.47L856.91 181.88L213.31 181.04ZM209.93 180.48L860.27 181.32L856.79 180.76L213.42 179.94ZM210.12 179.40L860.09 180.22L856.68 179.69L213.53 178.88ZM210.29 178.37L859.91 179.17L856.57 178.66L213.63 177.87ZM210.46 177.38L859.73 178.16L856.47 177.67L213.73 176.90ZM210.62 176.43L859.57 177.20L856.37 176.72L213.83 175.97ZM210.78 175.51L859.41 176.27L856.27 175.81L213.92 175.07ZM210.93 174.63L859.26 175.37L856.18 174.93L214.01 174.21ZM211.07 173.78L859.11 174.51L856.09 174.09L214.10 173.38ZM211.21 172.97L858.97 173.68L856.01 173.27L214.18 172.57ZM211.35 172.18L858.83 172.88L855.93 172.49L214.26 171.80ZM211.47 171.42L858.70 172.11L855.85 171.73L214.33 171.06ZM211.60 170.69L858.57 171.37L855.77 171.00L214.41 170.34ZM211.72 169.99L858.45 170.65L855.70 170.30L214.48 169.64ZM211.84 169.30L858.33 169.95L855.63 169.61L214.55 168.97ZM211.95 168.64L858.22 169.28L855.56 168.95L214.61 168.33ZM212.06 168.01L858.11 168.64L855.49 168.32L214.68 167.70ZM212.16 167.39L858.00 168.01L855.43 167.70L214.74 167.09ZM212.26 166.79L857.90 167.40L855.36 167.10L214.80 166.50ZM212.36 166.21L857.80 166.81L855.30 166.52L214.86 165.93ZM212.46 165.65L857.70 166.24L855.24 165.96L214.92 165.38Z"/></clipPath><path clip-path="url(#rE)" fill="#c7c7c4" d="M92.11 165.82L95.81 165.82L102.48 165.28L98.83 165.27ZM90.96 166.53L94.73 166.53L109.77 165.28L106.12 165.28ZM91.54 167.12L95.37 167.13L117.06 165.29L113.41 165.29ZM90.33 167.89L94.24 167.89L124.36 165.30L120.71 165.29ZM90.92 168.52L94.90 168.53L131.65 165.30L128.00 165.30ZM91.53 169.18L95.57 169.19L138.95 165.31L135.30 165.31ZM90.26 170.04L94.39 170.04L146.26 165.32L142.61 165.31ZM90.88 170.75L95.08 170.75L153.56 165.32L149.91 165.32ZM91.52 171.48L95.80 171.49L160.87 165.33L157.22 165.33ZM90.17 172.44L94.55 172.44L168.19 165.34L164.53 165.33ZM90.83 173.24L95.29 173.24L175.50 165.34L171.84 165.34ZM89.41 174.28L93.97 174.28L182.82 165.35L179.16 165.35ZM90.08 175.15L94.73 175.15L190.14 165.36L186.48 165.35ZM90.77 176.05L95.52 176.06L197.46 165.36L193.80 165.36ZM89.25 177.23L94.12 177.24L204.79 165.37L201.12 165.36ZM89.97 178.22L94.94 178.23L212.12 165.37L208.45 165.37ZM90.71 179.25L95.78 179.26L219.45 165.38L215.78 165.38ZM89.08 180.60L94.29 180.61L226.78 165.39L223.11 165.38ZM89.84 181.74L95.17 181.75L234.12 165.39L230.45 165.39ZM88.11 183.23L93.58 183.24L241.46 165.40L237.79 165.40ZM88.88 184.49L94.49 184.50L248.80 165.41L245.13 165.40ZM89.70 185.81L95.44 185.81L256.14 165.41L252.47 165.41ZM87.82 187.54L93.74 187.55L263.49 165.42L259.82 165.42ZM88.65 189.01L94.72 189.02L270.84 165.43L267.16 165.42ZM89.53 190.56L95.76 190.57L278.19 165.43L274.52 165.43ZM87.48 192.61L93.92 192.62L285.55 165.44L281.87 165.44ZM88.38 194.36L95.00 194.37L292.91 165.45L289.23 165.44ZM86.15 196.67L93.01 196.68L300.27 165.45L296.59 165.45ZM87.08 198.65L94.13 198.66L307.63 165.46L303.95 165.46ZM88.06 200.75L95.33 200.77L315.00 165.47L311.31 165.46ZM85.59 203.56L93.14 203.57L322.37 165.47L318.68 165.47ZM86.59 205.98L94.39 205.99L329.74 165.48L326.05 165.48ZM87.66 208.55L95.73 208.57L337.11 165.49L333.43 165.49ZM84.89 212.02L93.31 212.04L344.49 165.50L340.80 165.49ZM85.98 215.04L94.71 215.06L351.87 165.50L348.18 165.50ZM82.90 219.12L92.04 219.14L359.26 165.51L355.56 165.51ZM84.01 222.68L93.52 222.70L366.64 165.52L362.95 165.51ZM85.22 226.54L95.12 226.56L374.03 165.52L370.34 165.52ZM81.65 231.82L92.10 231.85L381.42 165.53L377.73 165.53ZM82.87 236.50L93.80 236.53L388.82 165.54L385.12 165.53ZM84.21 241.62L95.66 241.65L396.21 165.54L392.51 165.54ZM79.99 248.74L92.16 248.78L403.61 165.55L399.91 165.55ZM81.33 255.14L94.16 255.18L411.01 165.56L407.31 165.55ZM76.36 264.15L90.11 264.19L418.42 165.56L414.72 165.56ZM77.67 272.36L92.26 272.42L425.83 165.57L422.12 165.57ZM79.15 281.65L94.69 281.71L433.24 165.58L429.53 165.57ZM72.84 295.07L89.75 295.15L440.65 165.58L436.94 165.58ZM74.20 307.68L92.40 307.76L448.07 165.59L444.36 165.59ZM75.79 322.37L95.50 322.47L455.49 165.60L451.78 165.59ZM67.21 344.47L89.17 344.59L462.91 165.60L459.20 165.60ZM68.46 366.22L92.64 366.37L470.33 165.61L466.62 165.61ZM56.58 400.42L84.26 400.61L477.76 165.62L474.05 165.61ZM56.80 435.91L88.10 436.16L485.19 165.62L481.48 165.62ZM57.08 482.12L93.11 482.45L492.62 165.63L488.91 165.63ZM35.41 563.80L79.77 564.29L500.06 165.64L496.34 165.63ZM30.95 662.90L85.45 663.64L507.50 165.64L503.78 165.64ZM58.85 773.57L124.73 774.65L514.94 165.65L511.22 165.65ZM190.83 775.74L257.15 776.83L522.38 165.66L518.66 165.65ZM323.70 777.92L390.47 779.01L529.83 165.66L526.11 165.66ZM457.46 780.11L524.69 781.22L537.28 165.67L533.56 165.67ZM592.14 782.32L659.82 783.43L544.73 165.68L541.01 165.67ZM727.74 784.55L795.88 785.66L552.19 165.68L548.46 165.68ZM864.26 786.79L932.87 787.91L559.65 165.69L555.92 165.69ZM971.51 746.08L1036.03 747.07L567.11 165.70L563.38 165.69ZM984.12 619.87L1035.44 620.50L574.57 165.70L570.84 165.70ZM973.71 519.78L1014.53 520.18L582.04 165.71L578.30 165.71ZM982.04 465.12L1017.14 465.42L589.51 165.72L585.77 165.71ZM974.73 415.02L1004.58 415.23L596.98 165.72L593.24 165.72ZM969.33 377.94L995.29 378.10L604.45 165.73L600.72 165.73ZM975.32 354.61L998.85 354.74L611.93 165.74L608.19 165.73ZM970.88 330.91L991.92 331.02L619.41 165.74L615.67 165.74ZM975.71 315.31L995.12 315.40L626.90 165.75L623.15 165.75ZM971.94 298.86L989.63 298.94L634.38 165.76L630.64 165.75ZM975.97 287.69L992.50 287.76L641.87 165.76L638.13 165.76ZM972.70 275.62L987.96 275.67L649.36 165.77L645.62 165.77ZM969.89 265.26L984.07 265.30L656.86 165.78L653.11 165.77ZM973.28 257.99L986.70 258.03L664.36 165.79L660.61 165.78ZM970.76 249.91L983.33 249.95L671.86 165.79L668.10 165.79ZM973.74 244.16L985.71 244.19L679.36 165.80L675.61 165.80ZM971.44 237.68L982.74 237.71L686.86 165.81L683.11 165.80ZM969.39 231.90L980.08 231.93L694.37 165.81L690.62 165.81ZM972.00 227.71L982.26 227.73L701.88 165.82L698.13 165.82ZM970.11 222.92L979.86 222.94L709.40 165.83L705.64 165.82ZM972.47 219.42L981.86 219.44L716.92 165.83L713.16 165.83ZM970.70 215.39L979.67 215.41L724.44 165.84L720.68 165.84ZM969.09 211.71L977.67 211.73L731.96 165.85L728.20 165.84ZM971.21 208.99L979.51 209.01L739.49 165.85L735.72 165.85ZM969.69 205.83L977.66 205.84L747.01 165.86L743.25 165.86ZM971.65 203.48L979.37 203.49L754.55 165.87L750.78 165.86ZM970.22 200.73L977.65 200.74L762.08 165.87L758.31 165.87ZM972.03 198.68L979.25 198.69L769.62 165.88L765.85 165.88ZM970.67 196.27L977.64 196.28L777.16 165.89L773.39 165.88ZM969.41 194.03L976.14 194.04L784.70 165.89L780.93 165.89ZM971.08 192.34L977.63 192.35L792.24 165.90L788.47 165.90ZM969.87 190.35L976.22 190.36L799.79 165.91L796.02 165.90ZM971.44 188.85L977.63 188.85L807.34 165.91L803.57 165.91ZM970.29 187.07L976.29 187.07L814.90 165.92L811.12 165.92ZM969.20 185.39L975.03 185.40L822.46 165.93L818.68 165.93ZM970.66 184.12L976.35 184.13L830.02 165.94L826.24 165.93ZM969.62 182.61L975.15 182.62L837.58 165.94L833.80 165.94ZM970.99 181.46L976.41 181.47L845.14 165.95L841.36 165.95ZM969.99 180.10L975.27 180.10L852.71 165.96L848.93 165.95ZM969.04 178.80L974.18 178.80L860.28 165.96L856.50 165.96ZM970.33 177.81L975.37 177.81L867.86 165.97L864.07 165.97ZM969.42 176.62L974.33 176.63L875.44 165.98L871.65 165.97ZM970.64 175.72L975.46 175.72L883.02 165.98L879.22 165.98ZM969.76 174.63L974.46 174.64L890.60 165.99L886.81 165.99ZM970.93 173.80L975.55 173.81L898.18 166.00L894.39 165.99ZM970.08 172.81L974.59 172.81L905.77 166.00L901.98 166.00ZM969.26 171.85L973.67 171.86L913.36 166.01L909.57 166.01ZM970.37 171.12L974.70 171.12L920.96 166.02L917.16 166.01ZM969.57 170.24L973.82 170.24L928.56 166.02L924.76 166.02ZM970.63 169.56L974.81 169.57L936.16 166.03L932.35 166.03ZM969.87 168.74L973.95 168.75L943.76 166.04L939.96 166.04ZM969.13 167.96L973.14 167.96L951.36 166.05L947.56 166.04ZM970.14 167.36L974.08 167.36L958.97 166.05L955.17 166.05ZM969.42 166.63L973.29 166.63L966.58 166.06L962.78 166.06Z"/><path clip-path="url(#rO)" fill="#c7c7c4" d="M91.83 165.54L95.50 165.54L98.83 165.27L95.19 165.27ZM90.68 166.24L94.42 166.24L106.12 165.28L102.48 165.28ZM91.25 166.82L95.05 166.83L113.41 165.29L109.77 165.28ZM91.83 167.43L95.70 167.43L120.71 165.29L117.06 165.29ZM90.62 168.20L94.57 168.21L128.00 165.30L124.36 165.30ZM91.22 168.85L95.23 168.85L135.30 165.31L131.65 165.30ZM91.84 169.52L95.92 169.52L142.61 165.31L138.95 165.31ZM90.56 170.39L94.73 170.39L149.91 165.32L146.26 165.32ZM91.20 171.11L95.44 171.12L157.22 165.33L153.56 165.32ZM89.85 172.05L94.19 172.06L164.53 165.33L160.87 165.33ZM90.50 172.84L94.91 172.84L171.84 165.34L168.19 165.34ZM91.17 173.65L95.67 173.65L179.16 165.35L175.50 165.34ZM89.74 174.71L94.35 174.71L186.48 165.35L182.82 165.35ZM90.42 175.59L95.12 175.60L193.80 165.36L190.14 165.36ZM91.13 176.52L95.93 176.52L201.12 165.36L197.46 165.36ZM89.61 177.72L94.52 177.73L208.45 165.37L204.79 165.37ZM90.34 178.73L95.36 178.74L215.78 165.38L212.12 165.37ZM88.71 180.05L93.87 180.06L223.11 165.38L219.45 165.38ZM89.46 181.16L94.73 181.17L230.45 165.39L226.78 165.39ZM90.24 182.33L95.62 182.33L237.79 165.40L234.12 165.39ZM88.49 183.85L94.03 183.86L245.13 165.40L241.46 165.40ZM89.29 185.14L94.96 185.15L252.47 165.41L248.80 165.41ZM90.12 186.49L95.94 186.50L259.82 165.42L256.14 165.41ZM88.23 188.27L94.22 188.28L267.16 165.42L263.49 165.42ZM89.09 189.78L95.24 189.79L274.52 165.43L270.84 165.43ZM87.05 191.77L93.40 191.78L281.87 165.44L278.19 165.43ZM87.92 193.47L94.45 193.48L289.23 165.44L285.55 165.44ZM88.85 195.27L95.56 195.28L296.59 165.45L292.91 165.45ZM86.61 197.65L93.56 197.66L303.95 165.46L300.27 165.45ZM87.56 199.69L94.72 199.70L311.31 165.46L307.63 165.46ZM88.57 201.85L95.95 201.87L318.68 165.47L315.00 165.47ZM86.08 204.75L93.76 204.76L326.05 165.48L322.37 165.47ZM87.11 207.24L95.05 207.26L333.43 165.49L329.74 165.48ZM84.37 210.60L92.65 210.61L340.80 165.49L337.11 165.49ZM85.43 213.50L94.00 213.52L348.18 165.50L344.49 165.50ZM86.56 216.63L95.46 216.65L355.56 165.51L351.87 165.50ZM83.44 220.86L92.77 220.88L362.95 165.51L359.26 165.51ZM84.60 224.57L94.31 224.59L370.34 165.52L366.64 165.52ZM85.86 228.59L95.97 228.62L377.73 165.53L374.03 165.52ZM82.25 234.11L92.93 234.14L385.12 165.53L381.42 165.53ZM83.53 239.00L94.71 239.03L392.51 165.54L388.82 165.54ZM79.37 245.78L91.24 245.81L399.91 165.55L396.21 165.54ZM80.64 251.85L93.14 251.89L407.31 165.55L403.61 165.55ZM82.06 258.60L95.25 258.64L414.72 165.56L411.01 165.56ZM77.00 268.13L91.15 268.18L422.12 165.57L418.42 165.56ZM78.39 276.86L93.44 276.92L429.53 165.57L425.83 165.57ZM72.23 289.42L88.56 289.48L436.94 165.58L433.24 165.58ZM73.50 301.15L91.03 301.22L444.36 165.59L440.65 165.58ZM74.97 314.74L93.89 314.82L451.78 165.59L448.07 165.59ZM66.67 335.03L87.67 335.14L459.20 165.60L455.49 165.60ZM67.80 354.82L90.82 354.95L466.62 165.61L462.91 165.60ZM69.18 378.84L94.65 379.00L474.05 165.61L470.33 165.61ZM56.68 417.07L86.06 417.29L481.48 165.62L477.76 165.62ZM56.93 457.40L90.43 457.68L488.91 165.63L485.19 165.62ZM37.07 526.89L77.66 527.30L496.34 165.63L492.62 165.63ZM33.40 608.27L82.32 608.87L503.78 165.64L500.06 165.64ZM27.86 731.59L89.38 732.54L511.22 165.65L507.50 165.64ZM124.73 774.65L190.83 775.74L518.66 165.65L514.94 165.65ZM257.15 776.83L323.70 777.92L526.11 165.66L522.38 165.66ZM390.47 779.01L457.46 780.11L533.56 165.67L529.83 165.66ZM524.69 781.22L592.14 782.32L541.01 165.67L537.28 165.67ZM659.82 783.43L727.74 784.55L548.46 165.68L544.73 165.68ZM795.88 785.66L864.26 786.79L555.92 165.69L552.19 165.68ZM932.87 787.91L1001.72 789.04L563.38 165.69L559.65 165.69ZM978.53 675.78L1035.70 676.56L570.84 165.70L567.11 165.70ZM988.67 574.35L1035.23 574.87L578.30 165.71L574.57 165.70ZM978.19 490.39L1015.93 490.73L585.77 165.71L582.04 165.71ZM971.03 433.10L1002.77 433.34L593.24 165.72L589.51 165.72ZM978.02 398.97L1006.19 399.16L600.72 165.73L596.98 165.72ZM972.47 365.70L997.16 365.84L608.19 165.73L604.45 165.73ZM977.92 344.51L1000.39 344.63L615.67 165.74L611.93 165.74ZM973.39 322.79L993.59 322.89L623.15 165.75L619.41 165.74ZM969.69 305.06L988.03 305.14L630.64 165.75L626.90 165.75ZM974.02 293.09L991.11 293.16L638.13 165.76L634.38 165.76ZM970.80 280.21L986.54 280.27L645.62 165.77L641.87 165.76ZM974.49 271.30L989.30 271.35L653.11 165.77L649.36 165.77ZM971.63 261.52L985.42 261.57L660.61 165.78L656.86 165.78ZM969.15 253.01L982.05 253.05L668.10 165.79L664.36 165.79ZM972.28 246.96L984.55 247.00L675.61 165.80L671.86 165.79ZM970.02 240.17L981.57 240.21L683.11 165.80L679.36 165.80ZM972.80 235.30L983.85 235.33L690.62 165.81L686.86 165.81ZM970.73 229.76L981.19 229.79L698.13 165.82L694.37 165.81ZM973.23 225.74L983.28 225.77L705.64 165.82L701.88 165.82ZM971.31 221.14L980.88 221.16L713.16 165.83L709.40 165.83ZM969.57 216.96L978.69 216.98L720.68 165.84L716.92 165.83ZM971.80 213.89L980.61 213.90L728.20 165.84L724.44 165.84ZM970.17 210.33L978.60 210.34L735.72 165.85L731.96 165.85ZM972.22 207.70L980.38 207.71L743.25 165.86L739.49 165.85ZM970.69 204.63L978.53 204.65L750.78 165.86L747.01 165.86ZM969.27 201.80L976.81 201.81L758.31 165.87L754.55 165.87ZM971.14 199.69L978.46 199.70L765.85 165.88L762.08 165.87ZM969.79 197.21L976.86 197.22L773.39 165.88L769.62 165.88ZM971.53 195.36L978.40 195.37L780.93 165.89L777.16 165.89ZM970.25 193.17L976.90 193.18L788.47 165.90L784.70 165.89ZM969.06 191.13L975.49 191.14L796.02 165.90L792.24 165.90ZM970.66 189.59L976.93 189.60L803.57 165.91L799.79 165.91ZM969.52 187.76L975.60 187.77L811.12 165.92L807.34 165.91ZM971.03 186.39L976.96 186.39L818.68 165.93L814.90 165.92ZM969.94 184.75L975.70 184.76L826.24 165.93L822.46 165.93ZM971.36 183.51L976.99 183.52L833.80 165.94L830.02 165.94ZM970.31 182.03L975.79 182.04L841.36 165.95L837.58 165.94ZM969.32 180.63L974.65 180.64L848.93 165.95L845.14 165.95ZM970.65 179.57L975.87 179.58L856.50 165.96L852.71 165.96ZM969.69 178.30L974.78 178.30L864.07 165.97L860.28 165.96ZM970.96 177.33L975.94 177.33L871.65 165.97L867.86 165.97ZM970.04 176.17L974.90 176.17L879.22 165.98L875.44 165.98ZM969.16 175.06L973.91 175.07L886.81 165.99L883.02 165.98ZM970.35 174.21L975.01 174.22L894.39 165.99L890.60 165.99ZM969.50 173.20L974.05 173.20L901.98 166.00L898.18 166.00ZM970.64 172.42L975.11 172.42L909.57 166.01L905.77 166.00ZM969.82 171.48L974.19 171.49L917.16 166.01L913.36 166.01ZM969.03 170.59L973.31 170.59L924.76 166.02L920.96 166.02ZM970.11 169.90L974.32 169.90L932.35 166.03L928.56 166.02ZM969.35 169.07L973.47 169.07L939.96 166.04L936.16 166.03ZM970.38 168.43L974.43 168.43L947.56 166.04L943.76 166.04ZM969.64 167.66L973.61 167.66L955.17 166.05L951.36 166.05ZM970.63 167.06L974.54 167.06L962.78 166.06L958.97 166.05ZM969.91 166.34L973.75 166.35L970.39 166.06L966.58 166.06Z"/><g filter="url(#bl)" font-family="Liberation Sans, sans-serif" font-size="94" text-anchor="middle" dominant-baseline="central" stroke-width="4"><text transform="matrix(0.2751 0.0037 -0.1792 0.3042 222.0 666.1)" fill="#dcdcda" stroke="#dcdcda">A4</text><text transform="matrix(0.2759 0.0038 -0.1482 0.3051 277.1 666.9)" fill="#e0e0e0" stroke="#e0e0e0">A5</text><text transform="matrix(0.2766 0.0038 -0.1169 0.3059 332.4 667.6)" fill="#dcdcda" stroke="#dcdcda">A6</text><text transform="matrix(0.2774 0.0038 -0.0856 0.3068 387.8 668.4)" fill="#e0e0e0" stroke="#e0e0e0">A7</text><text transform="matrix(0.2782 0.0038 -0.0540 0.3076 443.3 669.1)" fill="#dcdcda" stroke="#dcdcda">A8</text><text transform="matrix(0.2790 0.0038 -0.0223 0.3085 499.0 669.9)" fill="#e0e0e0" stroke="#e0e0e0">A1</text><text transform="matrix(0.2798 0.0038 0.0097 0.3094 554.9 670.6)" fill="#dcdcda" stroke="#dcdcda">A2</text><text transform="matrix(0.2806 0.0038 0.0418 0.3102 610.9 671.4)" fill="#e0e0e0" stroke="#e0e0e0">A3</text><text transform="matrix(0.2813 0.0038 0.0740 0.3111 667.1 672.2)" fill="#dcdcda" stroke="#dcdcda">A4</text><text transform="matrix(0.2821 0.0038 0.1065 0.3120 723.5 672.9)" fill="#e0e0e0" stroke="#e0e0e0">A5</text><text transform="matrix(0.2829 0.0039 0.1392 0.3129 780.0 673.7)" fill="#dcdcda" stroke="#dcdcda">A6</text><text transform="matrix(0.2837 0.0039 0.1720 0.3138 836.7 674.5)" fill="#e0e0e0" stroke="#e0e0e0">A7</text><text transform="matrix(0.2473 0.0030 -0.1445 0.2454 254.2 611.5)" fill="#e0e0e0" stroke="#e0e0e0">H4</text><text transform="matrix(0.2479 0.0030 -0.1195 0.2460 303.7 612.1)" fill="#dcdcda" stroke="#dcdcda">H5</text><text transform="matrix(0.2485 0.0030 -0.0943 0.2466 353.4 612.7)" fill="#e0e0e0" stroke="#e0e0e0">H6</text><text transform="matrix(0.2492 0.0030 -0.0690 0.2473 403.1 613.3)" fill="#dcdcda" stroke="#dcdcda">H7</text><text transform="matrix(0.2498 0.0031 -0.0435 0.2479 453.0 613.9)" fill="#e0e0e0" stroke="#e0e0e0">H8</text><text transform="matrix(0.2504 0.0031 -0.0179 0.2485 503.0 614.5)" fill="#dcdcda" stroke="#dcdcda">H1</text><text transform="matrix(0.2510 0.0031 0.0078 0.2491 553.2 615.1)" fill="#e0e0e0" stroke="#e0e0e0">H2</text><text transform="matrix(0.2517 0.0031 0.0336 0.2498 603.5 615.7)" fill="#dcdcda" stroke="#dcdcda">H3</text><text transform="matrix(0.2523 0.0031 0.0596 0.2504 653.9 616.3)" fill="#e0e0e0" stroke="#e0e0e0">H4</text><text transform="matrix(0.2530 0.0031 0.0857 0.2510 704.4 617.0)" fill="#dcdcda" stroke="#dcdcda">H5</text><text transform="matrix(0.2536 0.0031 0.1119 0.2517 755.0 617.6)" fill="#e0e0e0" stroke="#e0e0e0">H6</text><text transform="matrix(0.2542 0.0031 0.1383 0.2523 805.8 618.2)" fill="#dcdcda" stroke="#dcdcda">H7</text><text transform="matrix(0.2549 0.0031 0.1648 0.2529 856.7 618.8)" fill="#e0e0e0" stroke="#e0e0e0">H8</text><text transform="matrix(0.2241 0.0025 -0.1396 0.2017 235.6 566.4)" fill="#e0e0e0" stroke="#e0e0e0">G3</text><text transform="matrix(0.2246 0.0025 -0.1191 0.2021 280.4 566.9)" fill="#dcdcda" stroke="#dcdcda">G4</text><text transform="matrix(0.2251 0.0025 -0.0984 0.2026 325.4 567.4)" fill="#e0e0e0" stroke="#e0e0e0">G5</text><text transform="matrix(0.2256 0.0025 -0.0776 0.2030 370.5 567.9)" fill="#dcdcda" stroke="#dcdcda">G6</text><text transform="matrix(0.2261 0.0025 -0.0568 0.2035 415.6 568.4)" fill="#e0e0e0" stroke="#e0e0e0">G7</text><text transform="matrix(0.2266 0.0025 -0.0358 0.2040 460.9 568.9)" fill="#dcdcda" stroke="#dcdcda">G8</text><text transform="matrix(0.2271 0.0025 -0.0147 0.2044 506.3 569.4)" fill="#e0e0e0" stroke="#e0e0e0">G1</text><text transform="matrix(0.2277 0.0025 0.0064 0.2049 551.8 569.9)" fill="#dcdcda" stroke="#dcdcda">G2</text><text transform="matrix(0.2282 0.0025 0.0276 0.2054 597.4 570.4)" fill="#e0e0e0" stroke="#e0e0e0">G3</text><text transform="matrix(0.2287 0.0025 0.0490 0.2059 643.0 570.9)" fill="#dcdcda" stroke="#dcdcda">G4</text><text transform="matrix(0.2292 0.0025 0.0704 0.2063 688.8 571.4)" fill="#e0e0e0" stroke="#e0e0e0">G5</text><text transform="matrix(0.2298 0.0025 0.0920 0.2068 734.7 572.0)" fill="#dcdcda" stroke="#dcdcda">G6</text><text transform="matrix(0.2303 0.0026 0.1136 0.2073 780.7 572.5)" fill="#e0e0e0" stroke="#e0e0e0">G7</text><text transform="matrix(0.2308 0.0026 0.1354 0.2078 826.9 573.0)" fill="#dcdcda" stroke="#dcdcda">G8</text><text transform="matrix(0.2048 0.0021 -0.1342 0.1687 220.1 529.1)" fill="#e0e0e0" stroke="#e0e0e0">F2</text><text transform="matrix(0.2053 0.0021 -0.1170 0.1690 261.1 529.5)" fill="#dcdcda" stroke="#dcdcda">F3</text><text transform="matrix(0.2057 0.0021 -0.0998 0.1694 302.2 529.9)" fill="#e0e0e0" stroke="#e0e0e0">F4</text><text transform="matrix(0.2061 0.0021 -0.0824 0.1697 343.4 530.3)" fill="#dcdcda" stroke="#dcdcda">F5</text><text transform="matrix(0.2065 0.0021 -0.0650 0.1701 384.7 530.8)" fill="#e0e0e0" stroke="#e0e0e0">F6</text><text transform="matrix(0.2070 0.0021 -0.0475 0.1704 426.0 531.2)" fill="#dcdcda" stroke="#dcdcda">F7</text><text transform="matrix(0.2074 0.0021 -0.0300 0.1708 467.5 531.6)" fill="#e0e0e0" stroke="#e0e0e0">F8</text><text transform="matrix(0.2078 0.0021 -0.0123 0.1711 509.0 532.0)" fill="#dcdcda" stroke="#dcdcda">F1</text><text transform="matrix(0.2083 0.0021 0.0054 0.1715 550.6 532.4)" fill="#e0e0e0" stroke="#e0e0e0">F2</text><text transform="matrix(0.2087 0.0021 0.0231 0.1719 592.3 532.9)" fill="#dcdcda" stroke="#dcdcda">F3</text><text transform="matrix(0.2092 0.0021 0.0410 0.1722 634.1 533.3)" fill="#e0e0e0" stroke="#e0e0e0">F4</text><text transform="matrix(0.2096 0.0021 0.0589 0.1726 676.0 533.7)" fill="#dcdcda" stroke="#dcdcda">F5</text><text transform="matrix(0.2100 0.0021 0.0769 0.1729 717.9 534.1)" fill="#e0e0e0" stroke="#e0e0e0">F6</text><text transform="matrix(0.2105 0.0021 0.0950 0.1733 760.0 534.6)" fill="#dcdcda" stroke="#dcdcda">F7</text><text transform="matrix(0.2109 0.0021 0.1132 0.1737 802.1 535.0)" fill="#e0e0e0" stroke="#e0e0e0">F8</text><text transform="matrix(0.2114 0.0021 0.1314 0.1740 844.3 535.4)" fill="#dcdcda" stroke="#dcdcda">F1</text><text transform="matrix(0.1886 0.0018 -0.1287 0.1431 207.1 497.6)" fill="#e0e0e0" stroke="#e0e0e0">E1</text><text transform="matrix(0.1890 0.0018 -0.1141 0.1434 244.9 498.0)" fill="#dcdcda" stroke="#dcdcda">E2</text><text transform="matrix(0.1894 0.0018 -0.0995 0.1437 282.7 498.3)" fill="#e0e0e0" stroke="#e0e0e0">E3</text><text transform="matrix(0.1897 0.0018 -0.0848 0.1440 320.6 498.7)" fill="#dcdcda" stroke="#dcdcda">E4</text><text transform="matrix(0.1901 0.0018 -0.0701 0.1442 358.6 499.0)" fill="#e0e0e0" stroke="#e0e0e0">E5</text><text transform="matrix(0.1905 0.0018 -0.0552 0.1445 396.7 499.4)" fill="#dcdcda" stroke="#dcdcda">E6</text><text transform="matrix(0.1908 0.0018 -0.0404 0.1448 434.8 499.8)" fill="#e0e0e0" stroke="#e0e0e0">E7</text><text transform="matrix(0.1912 0.0018 -0.0255 0.1451 473.0 500.1)" fill="#dcdcda" stroke="#dcdcda">E8</text><text transform="matrix(0.1916 0.0018 -0.0105 0.1454 511.3 500.5)" fill="#e0e0e0" stroke="#e0e0e0">E1</text><text transform="matrix(0.1919 0.0018 0.0045 0.1456 549.6 500.8)" fill="#dcdcda" stroke="#dcdcda">E2</text><text transform="matrix(0.1923 0.0018 0.0196 0.1459 588.0 501.2)" fill="#e0e0e0" stroke="#e0e0e0">E3</text><text transform="matrix(0.1927 0.0018 0.0348 0.1462 626.5 501.5)" fill="#dcdcda" stroke="#dcdcda">E4</text><text transform="matrix(0.1930 0.0018 0.0500 0.1465 665.1 501.9)" fill="#e0e0e0" stroke="#e0e0e0">E5</text><text transform="matrix(0.1934 0.0018 0.0653 0.1468 703.7 502.3)" fill="#dcdcda" stroke="#dcdcda">E6</text><text transform="matrix(0.1938 0.0018 0.0806 0.1471 742.5 502.6)" fill="#e0e0e0" stroke="#e0e0e0">E7</text><text transform="matrix(0.1942 0.0018 0.0960 0.1473 781.3 503.0)" fill="#dcdcda" stroke="#dcdcda">E8</text><text transform="matrix(0.1945 0.0018 0.1114 0.1476 820.1 503.4)" fill="#e0e0e0" stroke="#e0e0e0">E1</text><text transform="matrix(0.1751 0.0015 -0.1108 0.1232 231.0 471.1)" fill="#dcdcda" stroke="#dcdcda">D1</text><text transform="matrix(0.1754 0.0015 -0.0982 0.1234 266.1 471.4)" fill="#e0e0e0" stroke="#e0e0e0">D2</text><text transform="matrix(0.1757 0.0015 -0.0856 0.1237 301.2 471.7)" fill="#dcdcda" stroke="#dcdcda">D3</text><text transform="matrix(0.1761 0.0015 -0.0730 0.1239 336.4 472.0)" fill="#e0e0e0" stroke="#e0e0e0">D4</text><text transform="matrix(0.1764 0.0015 -0.0603 0.1241 371.6 472.3)" fill="#dcdcda" stroke="#dcdcda">D5</text><text transform="matrix(0.1767 0.0015 -0.0475 0.1243 406.9 472.6)" fill="#e0e0e0" stroke="#e0e0e0">D6</text><text transform="matrix(0.1770 0.0015 -0.0347 0.1245 442.3 472.9)" fill="#dcdcda" stroke="#dcdcda">D7</text><text transform="matrix(0.1773 0.0015 -0.0219 0.1248 477.7 473.2)" fill="#e0e0e0" stroke="#e0e0e0">D8</text><text transform="matrix(0.1776 0.0015 -0.0090 0.1250 513.2 473.5)" fill="#dcdcda" stroke="#dcdcda">D1</text><text transform="matrix(0.1780 0.0015 0.0039 0.1252 548.8 473.8)" fill="#e0e0e0" stroke="#e0e0e0">D2</text><text transform="matrix(0.1783 0.0015 0.0169 0.1254 584.4 474.1)" fill="#dcdcda" stroke="#dcdcda">D3</text><text transform="matrix(0.1786 0.0015 0.0299 0.1257 620.1 474.4)" fill="#e0e0e0" stroke="#e0e0e0">D4</text><text transform="matrix(0.1789 0.0015 0.0430 0.1259 655.8 474.7)" fill="#dcdcda" stroke="#dcdcda">D5</text><text transform="matrix(0.1792 0.0016 0.0561 0.1261 691.6 475.1)" fill="#e0e0e0" stroke="#e0e0e0">D6</text><text transform="matrix(0.1796 0.0016 0.0693 0.1263 727.5 475.4)" fill="#dcdcda" stroke="#dcdcda">D7</text><text transform="matrix(0.1799 0.0016 0.0825 0.1266 763.5 475.7)" fill="#e0e0e0" stroke="#e0e0e0">D8</text><text transform="matrix(0.1802 0.0016 0.0957 0.1268 799.5 476.0)" fill="#dcdcda" stroke="#dcdcda">D1</text><text transform="matrix(0.1805 0.0016 0.1090 0.1270 835.6 476.3)" fill="#e0e0e0" stroke="#e0e0e0">D2</text><text transform="matrix(0.1631 0.0013 -0.1073 0.1070 219.0 447.8)" fill="#dcdcda" stroke="#dcdcda" opacity="0.94">C8</text><text transform="matrix(0.1634 0.0013 -0.0964 0.1072 251.7 448.1)" fill="#e0e0e0" stroke="#e0e0e0" opacity="0.94">C1</text><text transform="matrix(0.1637 0.0013 -0.0854 0.1074 284.4 448.3)" fill="#dcdcda" stroke="#dcdcda" opacity="0.94">C2</text><text transform="matrix(0.1640 0.0013 -0.0745 0.1075 317.1 448.6)" fill="#e0e0e0" stroke="#e0e0e0" opacity="0.94">C3</text><text transform="matrix(0.1642 0.0013 -0.0635 0.1077 350.0 448.9)" fill="#dcdcda" stroke="#dcdcda" opacity="0.94">C4</text><text transform="matrix(0.1645 0.0013 -0.0524 0.1079 382.8 449.1)" fill="#e0e0e0" stroke="#e0e0e0" opacity="0.94">C5</text><text transform="matrix(0.1648 0.0013 -0.0413 0.1081 415.8 449.4)" fill="#dcdcda" stroke="#dcdcda" opacity="0.94">C6</text><text transform="matrix(0.1651 0.0013 -0.0302 0.1083 448.8 449.7)" fill="#e0e0e0" stroke="#e0e0e0" opacity="0.94">C7</text><text transform="matrix(0.1653 0.0013 -0.0190 0.1084 481.8 449.9)" fill="#dcdcda" stroke="#dcdcda" opacity="0.94">C8</text><text transform="matrix(0.1656 0.0013 -0.0078 0.1086 514.9 450.2)" fill="#e0e0e0" stroke="#e0e0e0" opacity="0.94">C1</text><text transform="matrix(0.1659 0.0013 0.0034 0.1088 548.0 450.5)" fill="#dcdcda" stroke="#dcdcda" opacity="0.94">C2</text><text transform="matrix(0.1662 0.0013 0.0147 0.1090 581.2 450.7)" fill="#e0e0e0" stroke="#e0e0e0" opacity="0.94">C3</text><text transform="matrix(0.1664 0.0013 0.0260 0.1092 614.5 451.0)" fill="#dcdcda" stroke="#dcdcda" opacity="0.94">C4</text><text transform="matrix(0.1667 0.0013 0.0373 0.1094 647.8 451.3)" fill="#e0e0e0" stroke="#e0e0e0" opacity="0.94">C5</text><text transform="matrix(0.1670 0.0013 0.0487 0.1095 681.2 451.5)" fill="#dcdcda" stroke="#dcdcda" opacity="0.94">C6</text><text transform="matrix(0.1673 0.0014 0.0601 0.1097 714.6 451.8)" fill="#e0e0e0" stroke="#e0e0e0" opacity="0.94">C7</text><text transform="matrix(0.1676 0.0014 0.0716 0.1099 748.1 452.1)" fill="#dcdcda" stroke="#dcdcda" opacity="0.94">C8</text><text transform="matrix(0.1678 0.0014 0.0831 0.1101 781.6 452.4)" fill="#e0e0e0" stroke="#e0e0e0" opacity="0.94">C1</text><text transform="matrix(0.1681 0.0014 0.0946 0.1103 815.2 452.6)" fill="#dcdcda" stroke="#dcdcda" opacity="0.94">C2</text><text transform="matrix(0.1684 0.0014 0.1062 0.1105 848.9 452.9)" fill="#e0e0e0" stroke="#e0e0e0" opacity="0.94">C3</text><text transform="matrix(0.1527 0.0012 -0.1037 0.0938 208.6 427.5)" fill="#dcdcda" stroke="#dcdcda" opacity="0.83">B7</text><text transform="matrix(0.1529 0.0012 -0.0942 0.0939 239.1 427.8)" fill="#e0e0e0" stroke="#e0e0e0" opacity="0.83">B8</text><text transform="matrix(0.1532 0.0012 -0.0846 0.0941 269.7 428.0)" fill="#dcdcda" stroke="#dcdcda" opacity="0.83">B1</text><text transform="matrix(0.1534 0.0012 -0.0750 0.0942 300.4 428.2)" fill="#e0e0e0" stroke="#e0e0e0" opacity="0.83">B2</text><text transform="matrix(0.1537 0.0012 -0.0654 0.0944 331.1 428.5)" fill="#dcdcda" stroke="#dcdcda" opacity="0.83">B3</text><text transform="matrix(0.1539 0.0012 -0.0557 0.0945 361.9 428.7)" fill="#e0e0e0" stroke="#e0e0e0" opacity="0.83">B4</text><text transform="matrix(0.1541 0.0012 -0.0460 0.0947 392.7 428.9)" fill="#dcdcda" stroke="#dcdcda" opacity="0.83">B5</text><text transform="matrix(0.1544 0.0012 -0.0363 0.0948 423.5 429.2)" fill="#e0e0e0" stroke="#e0e0e0" opacity="0.83">B6</text><text transform="matrix(0.1546 0.0012 -0.0265 0.0950 454.4 429.4)" fill="#dcdcda" stroke="#dcdcda" opacity="0.83">B7</text><text transform="matrix(0.1549 0.0012 -0.0167 0.0951 485.4 429.6)" fill="#e0e0e0" stroke="#e0e0e0" opacity="0.83">B8</text><text transform="matrix(0.1551 0.0012 -0.0069 0.0953 516.4 429.9)" fill="#dcdcda" stroke="#dcdcda" opacity="0.83">B1</text><text transform="matrix(0.1553 0.0012 0.0030 0.0954 547.4 430.1)" fill="#e0e0e0" stroke="#e0e0e0" opacity="0.83">B2</text><text transform="matrix(0.1556 0.0012 0.0129 0.0956 578.5 430.3)" fill="#dcdcda" stroke="#dcdcda" opacity="0.83">B3</text><text transform="matrix(0.1558 0.0012 0.0228 0.0957 609.6 430.6)" fill="#e0e0e0" stroke="#e0e0e0" opacity="0.83">B4</text><text transform="matrix(0.1561 0.0012 0.0327 0.0959 640.8 430.8)" fill="#dcdcda" stroke="#dcdcda" opacity="0.83">B5</text><text transform="matrix(0.1563 0.0012 0.0427 0.0960 672.1 431.0)" fill="#e0e0e0" stroke="#e0e0e0" opacity="0.83">B6</text><text transform="matrix(0.1566 0.0012 0.0527 0.0962 703.4 431.3)" fill="#dcdcda" stroke="#dcdcda" opacity="0.83">B7</text><text transform="matrix(0.1568 0.0012 0.0628 0.0963 734.7 431.5)" fill="#e0e0e0" stroke="#e0e0e0" opacity="0.83">B8</text><text transform="matrix(0.1571 0.0012 0.0728 0.0965 766.1 431.7)" fill="#dcdcda" stroke="#dcdcda" opacity="0.83">B1</text><text transform="matrix(0.1573 0.0012 0.0829 0.0966 797.5 432.0)" fill="#e0e0e0" stroke="#e0e0e0" opacity="0.83">B2</text><text transform="matrix(0.1576 0.0012 0.0931 0.0968 829.0 432.2)" fill="#dcdcda" stroke="#dcdcda" opacity="0.83">B3</text><text transform="matrix(0.1437 0.0010 -0.0918 0.0830 228.1 409.9)" fill="#e0e0e0" stroke="#e0e0e0" opacity="0.72">A7</text><text transform="matrix(0.1439 0.0010 -0.0834 0.0831 256.8 410.1)" fill="#dcdcda" stroke="#dcdcda" opacity="0.72">A8</text><text transform="matrix(0.1442 0.0010 -0.0749 0.0833 285.7 410.3)" fill="#e0e0e0" stroke="#e0e0e0" opacity="0.72">A1</text><text transform="matrix(0.1444 0.0010 -0.0664 0.0834 314.5 410.5)" fill="#dcdcda" stroke="#dcdcda" opacity="0.72">A2</text><text transform="matrix(0.1446 0.0010 -0.0578 0.0835 343.4 410.7)" fill="#e0e0e0" stroke="#e0e0e0" opacity="0.72">A3</text><text transform="matrix(0.1448 0.0010 -0.0493 0.0836 372.3 410.9)" fill="#dcdcda" stroke="#dcdcda" opacity="0.72">A4</text><text transform="matrix(0.1450 0.0010 -0.0407 0.0837 401.3 411.1)" fill="#e0e0e0" stroke="#e0e0e0" opacity="0.72">A5</text><text transform="matrix(0.1452 0.0010 -0.0321 0.0839 430.3 411.3)" fill="#dcdcda" stroke="#dcdcda" opacity="0.72">A6</text><text transform="matrix(0.1454 0.0010 -0.0234 0.0840 459.4 411.5)" fill="#e0e0e0" stroke="#e0e0e0" opacity="0.72">A7</text><text transform="matrix(0.1456 0.0010 -0.0148 0.0841 488.5 411.7)" fill="#dcdcda" stroke="#dcdcda" opacity="0.72">A8</text><text transform="matrix(0.1459 0.0010 -0.0061 0.0842 517.7 411.9)" fill="#e0e0e0" stroke="#e0e0e0" opacity="0.72">A1</text><text transform="matrix(0.1461 0.0010 0.0026 0.0844 546.8 412.1)" fill="#dcdcda" stroke="#dcdcda" opacity="0.72">A2</text><text transform="matrix(0.1463 0.0010 0.0114 0.0845 576.1 412.4)" fill="#e0e0e0" stroke="#e0e0e0" opacity="0.72">A3</text><text transform="matrix(0.1465 0.0010 0.0201 0.0846 605.4 412.6)" fill="#dcdcda" stroke="#dcdcda" opacity="0.72">A4</text><text transform="matrix(0.1467 0.0010 0.0289 0.0847 634.7 412.8)" fill="#e0e0e0" stroke="#e0e0e0" opacity="0.72">A5</text><text transform="matrix(0.1469 0.0010 0.0377 0.0849 664.0 413.0)" fill="#dcdcda" stroke="#dcdcda" opacity="0.72">A6</text><text transform="matrix(0.1471 0.0010 0.0466 0.0850 693.4 413.2)" fill="#e0e0e0" stroke="#e0e0e0" opacity="0.72">A7</text><text transform="matrix(0.1474 0.0010 0.0555 0.0851 722.9 413.4)" fill="#dcdcda" stroke="#dcdcda" opacity="0.72">A8</text><text transform="matrix(0.1476 0.0010 0.0643 0.0852 752.4 413.6)" fill="#e0e0e0" stroke="#e0e0e0" opacity="0.72">A1</text><text transform="matrix(0.1478 0.0011 0.0733 0.0854 781.9 413.8)" fill="#dcdcda" stroke="#dcdcda" opacity="0.72">A2</text><text transform="matrix(0.1480 0.0011 0.0822 0.0855 811.5 414.0)" fill="#e0e0e0" stroke="#e0e0e0" opacity="0.72">A3</text><text transform="matrix(0.1482 0.0011 0.0912 0.0856 841.1 414.2)" fill="#dcdcda" stroke="#dcdcda" opacity="0.72">A4</text><text transform="matrix(0.1356 0.0009 -0.0894 0.0739 218.3 394.0)" fill="#e0e0e0" stroke="#e0e0e0" opacity="0.61">H6</text><text transform="matrix(0.1358 0.0009 -0.0818 0.0740 245.4 394.2)" fill="#dcdcda" stroke="#dcdcda" opacity="0.61">H7</text><text transform="matrix(0.1359 0.0009 -0.0743 0.0741 272.6 394.4)" fill="#e0e0e0" stroke="#e0e0e0" opacity="0.61">H8</text><text transform="matrix(0.1361 0.0009 -0.0667 0.0742 299.8 394.6)" fill="#dcdcda" stroke="#dcdcda" opacity="0.61">H1</text><text transform="matrix(0.1363 0.0009 -0.0591 0.0743 327.0 394.8)" fill="#e0e0e0" stroke="#e0e0e0" opacity="0.61">H2</text><text transform="matrix(0.1365 0.0009 -0.0515 0.0744 354.3 394.9)" fill="#dcdcda" stroke="#dcdcda" opacity="0.61">H3</text><text transform="matrix(0.1367 0.0009 -0.0439 0.0745 381.6 395.1)" fill="#e0e0e0" stroke="#e0e0e0" opacity="0.61">H4</text><text transform="matrix(0.1369 0.0009 -0.0362 0.0746 409.0 395.3)" fill="#dcdcda" stroke="#dcdcda" opacity="0.61">H5</text><text transform="matrix(0.1371 0.0009 -0.0286 0.0747 436.4 395.5)" fill="#e0e0e0" stroke="#e0e0e0" opacity="0.61">H6</text><text transform="matrix(0.1373 0.0009 -0.0209 0.0748 463.8 395.7)" fill="#dcdcda" stroke="#dcdcda" opacity="0.61">H7</text><text transform="matrix(0.1375 0.0009 -0.0131 0.0749 491.3 395.9)" fill="#e0e0e0" stroke="#e0e0e0" opacity="0.61">H8</text><text transform="matrix(0.1376 0.0009 -0.0054 0.0750 518.8 396.0)" fill="#dcdcda" stroke="#dcdcda" opacity="0.61">H1</text><text transform="matrix(0.1378 0.0009 0.0023 0.0751 546.3 396.2)" fill="#e0e0e0" stroke="#e0e0e0" opacity="0.61">H2</text><text transform="matrix(0.1380 0.0009 0.0101 0.0752 573.9 396.4)" fill="#dcdcda" stroke="#dcdcda" opacity="0.61">H3</text><text transform="matrix(0.1382 0.0009 0.0179 0.0753 601.6 396.6)" fill="#e0e0e0" stroke="#e0e0e0" opacity="0.61">H4</text><text transform="matrix(0.1384 0.0009 0.0258 0.0754 629.2 396.8)" fill="#dcdcda" stroke="#dcdcda" opacity="0.61">H5</text><text transform="matrix(0.1386 0.0009 0.0336 0.0755 656.9 397.0)" fill="#e0e0e0" stroke="#e0e0e0" opacity="0.61">H6</text><text transform="matrix(0.1388 0.0009 0.0415 0.0756 684.7 397.2)" fill="#dcdcda" stroke="#dcdcda" opacity="0.61">H7</text><text transform="matrix(0.1390 0.0009 0.0494 0.0758 712.4 397.3)" fill="#e0e0e0" stroke="#e0e0e0" opacity="0.61">H8</text><text transform="matrix(0.1392 0.0009 0.0573 0.0759 740.3 397.5)" fill="#dcdcda" stroke="#dcdcda" opacity="0.61">H1</text><text transform="matrix(0.1394 0.0009 0.0652 0.0760 768.1 397.7)" fill="#e0e0e0" stroke="#e0e0e0" opacity="0.61">H2</text><text transform="matrix(0.1396 0.0009 0.0732 0.0761 796.0 397.9)" fill="#dcdcda" stroke="#dcdcda" opacity="0.61">H3</text><text transform="matrix(0.1398 0.0009 0.0811 0.0762 823.9 398.1)" fill="#e0e0e0" stroke="#e0e0e0" opacity="0.61">H4</text><text transform="matrix(0.1400 0.0009 0.0891 0.0763 851.9 398.3)" fill="#dcdcda" stroke="#dcdcda" opacity="0.61">H5</text><text transform="matrix(0.1283 0.0008 -0.0869 0.0662 209.5 379.9)" fill="#e0e0e0" stroke="#e0e0e0" opacity="0.50">G5</text><text transform="matrix(0.1284 0.0008 -0.0801 0.0663 235.2 380.0)" fill="#dcdcda" stroke="#dcdcda" opacity="0.50">G6</text><text transform="matrix(0.1286 0.0008 -0.0734 0.0664 260.9 380.2)" fill="#e0e0e0" stroke="#e0e0e0" opacity="0.50">G7</text><text transform="matrix(0.1288 0.0008 -0.0666 0.0664 286.6 380.4)" fill="#dcdcda" stroke="#dcdcda" opacity="0.50">G8</text><text transform="matrix(0.1289 0.0008 -0.0598 0.0665 312.4 380.5)" fill="#e0e0e0" stroke="#e0e0e0" opacity="0.50">G1</text><text transform="matrix(0.1291 0.0008 -0.0530 0.0666 338.2 380.7)" fill="#dcdcda" stroke="#dcdcda" opacity="0.50">G2</text><text transform="matrix(0.1293 0.0008 -0.0462 0.0667 364.1 380.8)" fill="#e0e0e0" stroke="#e0e0e0" opacity="0.50">G3</text><text transform="matrix(0.1295 0.0008 -0.0393 0.0668 389.9 381.0)" fill="#dcdcda" stroke="#dcdcda" opacity="0.50">G4</text><text transform="matrix(0.1296 0.0008 -0.0325 0.0669 415.9 381.2)" fill="#e0e0e0" stroke="#e0e0e0" opacity="0.50">G5</text><text transform="matrix(0.1298 0.0008 -0.0256 0.0670 441.8 381.3)" fill="#dcdcda" stroke="#dcdcda" opacity="0.50">G6</text><text transform="matrix(0.1300 0.0008 -0.0187 0.0671 467.8 381.5)" fill="#e0e0e0" stroke="#e0e0e0" opacity="0.50">G7</text><text transform="matrix(0.1301 0.0008 -0.0118 0.0671 493.8 381.7)" fill="#dcdcda" stroke="#dcdcda" opacity="0.50">G8</text><text transform="matrix(0.1303 0.0008 -0.0049 0.0672 519.8 381.8)" fill="#e0e0e0" stroke="#e0e0e0" opacity="0.50">G1</text><text transform="matrix(0.1305 0.0008 0.0021 0.0673 545.9 382.0)" fill="#dcdcda" stroke="#dcdcda" opacity="0.50">G2</text><text transform="matrix(0.1306 0.0008 0.0091 0.0674 572.0 382.2)" fill="#e0e0e0" stroke="#e0e0e0" opacity="0.50">G3</text><text transform="matrix(0.1308 0.0008 0.0161 0.0675 598.2 382.3)" fill="#dcdcda" stroke="#dcdcda" opacity="0.50">G4</text><text transform="matrix(0.1310 0.0008 0.0231 0.0676 624.3 382.5)" fill="#e0e0e0" stroke="#e0e0e0" opacity="0.50">G5</text><text transform="matrix(0.1312 0.0008 0.0301 0.0677 650.6 382.7)" fill="#dcdcda" stroke="#dcdcda" opacity="0.50">G6</text><text transform="matrix(0.1313 0.0008 0.0371 0.0678 676.8 382.8)" fill="#e0e0e0" stroke="#e0e0e0" opacity="0.50">G7</text><text transform="matrix(0.1315 0.0008 0.0442 0.0679 703.1 383.0)" fill="#dcdcda" stroke="#dcdcda" opacity="0.50">G8</text><text transform="matrix(0.1317 0.0008 0.0513 0.0679 729.4 383.2)" fill="#e0e0e0" stroke="#e0e0e0" opacity="0.50">G1</text><text transform="matrix(0.1319 0.0008 0.0584 0.0680 755.8 383.3)" fill="#dcdcda" stroke="#dcdcda" opacity="0.50">G2</text><text transform="matrix(0.1320 0.0008 0.0655 0.0681 782.2 383.5)" fill="#e0e0e0" stroke="#e0e0e0" opacity="0.50">G3</text><text transform="matrix(0.1322 0.0008 0.0727 0.0682 808.6 383.7)" fill="#dcdcda" stroke="#dcdcda" opacity="0.50">G4</text><text transform="matrix(0.1324 0.0008 0.0798 0.0683 835.0 383.8)" fill="#e0e0e0" stroke="#e0e0e0" opacity="0.50">G5</text><text transform="matrix(0.1219 0.0007 -0.0784 0.0597 226.0 367.3)" fill="#dcdcda" stroke="#dcdcda" opacity="0.39">F5</text><text transform="matrix(0.1220 0.0007 -0.0723 0.0598 250.4 367.4)" fill="#e0e0e0" stroke="#e0e0e0" opacity="0.39">F6</text><text transform="matrix(0.1222 0.0007 -0.0662 0.0599 274.8 367.6)" fill="#dcdcda" stroke="#dcdcda" opacity="0.39">F7</text><text transform="matrix(0.1223 0.0007 -0.0601 0.0599 299.3 367.7)" fill="#e0e0e0" stroke="#e0e0e0" opacity="0.39">F8</text><text transform="matrix(0.1225 0.0007 -0.0540 0.0600 323.8 367.9)" fill="#dcdcda" stroke="#dcdcda" opacity="0.39">F1</text><text transform="matrix(0.1226 0.0007 -0.0478 0.0601 348.3 368.0)" fill="#e0e0e0" stroke="#e0e0e0" opacity="0.39">F2</text><text transform="matrix(0.1228 0.0007 -0.0416 0.0601 372.8 368.2)" fill="#dcdcda" stroke="#dcdcda" opacity="0.39">F3</text><text transform="matrix(0.1229 0.0007 -0.0355 0.0602 397.4 368.3)" fill="#e0e0e0" stroke="#e0e0e0" opacity="0.39">F4</text><text transform="matrix(0.1231 0.0007 -0.0293 0.0603 422.0 368.5)" fill="#dcdcda" stroke="#dcdcda" opacity="0.39">F5</text><text transform="matrix(0.1233 0.0007 -0.0231 0.0604 446.7 368.6)" fill="#e0e0e0" stroke="#e0e0e0" opacity="0.39">F6</text><text transform="matrix(0.1234 0.0007 -0.0169 0.0604 471.3 368.8)" fill="#dcdcda" stroke="#dcdcda" opacity="0.39">F7</text><text transform="matrix(0.1236 0.0007 -0.0106 0.0605 496.0 368.9)" fill="#e0e0e0" stroke="#e0e0e0" opacity="0.39">F8</text><text transform="matrix(0.1237 0.0007 -0.0044 0.0606 520.7 369.1)" fill="#dcdcda" stroke="#dcdcda" opacity="0.39">F1</text><text transform="matrix(0.1239 0.0007 0.0019 0.0607 545.5 369.2)" fill="#e0e0e0" stroke="#e0e0e0" opacity="0.39">F2</text><text transform="matrix(0.1240 0.0007 0.0082 0.0608 570.3 369.4)" fill="#dcdcda" stroke="#dcdcda" opacity="0.39">F3</text><text transform="matrix(0.1242 0.0007 0.0145 0.0608 595.1 369.5)" fill="#e0e0e0" stroke="#e0e0e0" opacity="0.39">F4</text><text transform="matrix(0.1243 0.0007 0.0208 0.0609 620.0 369.7)" fill="#dcdcda" stroke="#dcdcda" opacity="0.39">F5</text><text transform="matrix(0.1245 0.0008 0.0271 0.0610 644.8 369.8)" fill="#e0e0e0" stroke="#e0e0e0" opacity="0.39">F6</text><text transform="matrix(0.1246 0.0008 0.0335 0.0611 669.8 370.0)" fill="#dcdcda" stroke="#dcdcda" opacity="0.39">F7</text><text transform="matrix(0.1248 0.0008 0.0398 0.0611 694.7 370.1)" fill="#e0e0e0" stroke="#e0e0e0" opacity="0.39">F8</text><text transform="matrix(0.1250 0.0008 0.0462 0.0612 719.7 370.3)" fill="#dcdcda" stroke="#dcdcda" opacity="0.39">F1</text><text transform="matrix(0.1251 0.0008 0.0526 0.0613 744.7 370.4)" fill="#e0e0e0" stroke="#e0e0e0" opacity="0.39">F2</text><text transform="matrix(0.1253 0.0008 0.0590 0.0614 769.7 370.6)" fill="#dcdcda" stroke="#dcdcda" opacity="0.39">F3</text><text transform="matrix(0.1254 0.0008 0.0654 0.0614 794.8 370.7)" fill="#e0e0e0" stroke="#e0e0e0" opacity="0.39">F4</text><text transform="matrix(0.1256 0.0008 0.0719 0.0615 819.9 370.9)" fill="#dcdcda" stroke="#dcdcda" opacity="0.39">F5</text><text transform="matrix(0.1257 0.0008 0.0783 0.0616 845.0 371.0)" fill="#e0e0e0" stroke="#e0e0e0" opacity="0.39">F6</text><text transform="matrix(0.1160 0.0007 -0.0766 0.0541 217.8 355.8)" fill="#dcdcda" stroke="#dcdcda" opacity="0.28">E4</text><text transform="matrix(0.1161 0.0007 -0.0711 0.0541 241.0 355.9)" fill="#e0e0e0" stroke="#e0e0e0" opacity="0.28">E5</text><text transform="matrix(0.1162 0.0007 -0.0655 0.0542 264.2 356.1)" fill="#dcdcda" stroke="#dcdcda" opacity="0.28">E6</text><text transform="matrix(0.1164 0.0007 -0.0600 0.0543 287.5 356.2)" fill="#e0e0e0" stroke="#e0e0e0" opacity="0.28">E7</text><text transform="matrix(0.1165 0.0007 -0.0545 0.0543 310.7 356.3)" fill="#dcdcda" stroke="#dcdcda" opacity="0.28">E8</text><text transform="matrix(0.1166 0.0007 -0.0489 0.0544 334.1 356.5)" fill="#e0e0e0" stroke="#e0e0e0" opacity="0.28">E1</text><text transform="matrix(0.1168 0.0007 -0.0433 0.0544 357.4 356.6)" fill="#dcdcda" stroke="#dcdcda" opacity="0.28">E2</text><text transform="matrix(0.1169 0.0007 -0.0377 0.0545 380.8 356.7)" fill="#e0e0e0" stroke="#e0e0e0" opacity="0.28">E3</text><text transform="matrix(0.1171 0.0007 -0.0321 0.0546 404.2 356.9)" fill="#dcdcda" stroke="#dcdcda" opacity="0.28">E4</text><text transform="matrix(0.1172 0.0007 -0.0265 0.0546 427.6 357.0)" fill="#e0e0e0" stroke="#e0e0e0" opacity="0.28">E5</text><text transform="matrix(0.1173 0.0007 -0.0209 0.0547 451.0 357.1)" fill="#dcdcda" stroke="#dcdcda" opacity="0.28">E6</text><text transform="matrix(0.1175 0.0007 -0.0153 0.0548 474.5 357.3)" fill="#e0e0e0" stroke="#e0e0e0" opacity="0.28">E7</text><text transform="matrix(0.1176 0.0007 -0.0096 0.0548 498.0 357.4)" fill="#dcdcda" stroke="#dcdcda" opacity="0.28">E8</text><text transform="matrix(0.1178 0.0007 -0.0040 0.0549 521.6 357.5)" fill="#e0e0e0" stroke="#e0e0e0" opacity="0.28">E1</text><text transform="matrix(0.1179 0.0007 0.0017 0.0550 545.1 357.7)" fill="#dcdcda" stroke="#dcdcda" opacity="0.28">E2</text><text transform="matrix(0.1180 0.0007 0.0074 0.0550 568.7 357.8)" fill="#e0e0e0" stroke="#e0e0e0" opacity="0.28">E3</text><text transform="matrix(0.1182 0.0007 0.0131 0.0551 592.4 357.9)" fill="#dcdcda" stroke="#dcdcda" opacity="0.28">E4</text><text transform="matrix(0.1183 0.0007 0.0188 0.0552 616.0 358.1)" fill="#e0e0e0" stroke="#e0e0e0" opacity="0.28">E5</text><text transform="matrix(0.1185 0.0007 0.0246 0.0552 639.7 358.2)" fill="#dcdcda" stroke="#dcdcda" opacity="0.28">E6</text><text transform="matrix(0.1186 0.0007 0.0303 0.0553 663.4 358.3)" fill="#e0e0e0" stroke="#e0e0e0" opacity="0.28">E7</text><text transform="matrix(0.1187 0.0007 0.0361 0.0554 687.1 358.5)" fill="#dcdcda" stroke="#dcdcda" opacity="0.28">E8</text><text transform="matrix(0.1189 0.0007 0.0418 0.0554 710.9 358.6)" fill="#e0e0e0" stroke="#e0e0e0" opacity="0.28">E1</text><text transform="matrix(0.1190 0.0007 0.0476 0.0555 734.7 358.8)" fill="#dcdcda" stroke="#dcdcda" opacity="0.28">E2</text><text transform="matrix(0.1192 0.0007 0.0534 0.0556 758.5 358.9)" fill="#e0e0e0" stroke="#e0e0e0" opacity="0.28">E3</text><text transform="matrix(0.1193 0.0007 0.0592 0.0556 782.3 359.0)" fill="#dcdcda" stroke="#dcdcda" opacity="0.28">E4</text><text transform="matrix(0.1194 0.0007 0.0651 0.0557 806.2 359.2)" fill="#e0e0e0" stroke="#e0e0e0" opacity="0.28">E5</text><text transform="matrix(0.1196 0.0007 0.0709 0.0558 830.1 359.3)" fill="#dcdcda" stroke="#dcdcda" opacity="0.28">E6</text><text transform="matrix(0.1197 0.0007 0.0768 0.0558 854.1 359.4)" fill="#e0e0e0" stroke="#e0e0e0" opacity="0.28">E7</text><text transform="matrix(0.1107 0.0006 -0.0697 0.0492 232.4 345.5)" fill="#e0e0e0" stroke="#e0e0e0" opacity="0.17">D4</text><text transform="matrix(0.1108 0.0006 -0.0647 0.0493 254.5 345.6)" fill="#dcdcda" stroke="#dcdcda" opacity="0.17">D5</text><text transform="matrix(0.1110 0.0006 -0.0597 0.0494 276.7 345.7)" fill="#e0e0e0" stroke="#e0e0e0" opacity="0.17">D6</text><text transform="matrix(0.1111 0.0006 -0.0546 0.0494 298.9 345.8)" fill="#dcdcda" stroke="#dcdcda" opacity="0.17">D7</text><text transform="matrix(0.1112 0.0006 -0.0496 0.0495 321.1 346.0)" fill="#e0e0e0" stroke="#e0e0e0" opacity="0.17">D8</text><text transform="matrix(0.1113 0.0006 -0.0445 0.0495 343.4 346.1)" fill="#dcdcda" stroke="#dcdcda" opacity="0.17">D1</text><text transform="matrix(0.1115 0.0006 -0.0395 0.0496 365.7 346.2)" fill="#e0e0e0" stroke="#e0e0e0" opacity="0.17">D2</text><text transform="matrix(0.1116 0.0006 -0.0344 0.0496 388.0 346.3)" fill="#dcdcda" stroke="#dcdcda" opacity="0.17">D3</text><text transform="matrix(0.1117 0.0006 -0.0293 0.0497 410.3 346.4)" fill="#e0e0e0" stroke="#e0e0e0" opacity="0.17">D4</text><text transform="matrix(0.1118 0.0006 -0.0242 0.0497 432.7 346.6)" fill="#dcdcda" stroke="#dcdcda" opacity="0.17">D5</text><text transform="matrix(0.1120 0.0006 -0.0190 0.0498 455.0 346.7)" fill="#e0e0e0" stroke="#e0e0e0" opacity="0.17">D6</text><text transform="matrix(0.1121 0.0006 -0.0139 0.0499 477.4 346.8)" fill="#dcdcda" stroke="#dcdcda" opacity="0.17">D7</text><text transform="matrix(0.1122 0.0006 -0.0088 0.0499 499.9 346.9)" fill="#e0e0e0" stroke="#e0e0e0" opacity="0.17">D8</text><text transform="matrix(0.1123 0.0006 -0.0036 0.0500 522.3 347.1)" fill="#dcdcda" stroke="#dcdcda" opacity="0.17">D1</text><text transform="matrix(0.1125 0.0006 0.0016 0.0500 544.8 347.2)" fill="#e0e0e0" stroke="#e0e0e0" opacity="0.17">D2</text><text transform="matrix(0.1126 0.0006 0.0067 0.0501 567.3 347.3)" fill="#dcdcda" stroke="#dcdcda" opacity="0.17">D3</text><text transform="matrix(0.1127 0.0006 0.0119 0.0501 589.9 347.4)" fill="#e0e0e0" stroke="#e0e0e0" opacity="0.17">D4</text><text transform="matrix(0.1129 0.0006 0.0171 0.0502 612.4 347.6)" fill="#dcdcda" stroke="#dcdcda" opacity="0.17">D5</text><text transform="matrix(0.1130 0.0006 0.0224 0.0503 635.0 347.7)" fill="#e0e0e0" stroke="#e0e0e0" opacity="0.17">D6</text><text transform="matrix(0.1131 0.0006 0.0276 0.0503 657.6 347.8)" fill="#dcdcda" stroke="#dcdcda" opacity="0.17">D7</text><text transform="matrix(0.1132 0.0006 0.0328 0.0504 680.2 347.9)" fill="#e0e0e0" stroke="#e0e0e0" opacity="0.17">D8</text><text transform="matrix(0.1134 0.0006 0.0381 0.0504 702.9 348.0)" fill="#dcdcda" stroke="#dcdcda" opacity="0.17">D1</text><text transform="matrix(0.1135 0.0006 0.0433 0.0505 725.6 348.2)" fill="#e0e0e0" stroke="#e0e0e0" opacity="0.17">D2</text><text transform="matrix(0.1136 0.0006 0.0486 0.0505 748.3 348.3)" fill="#dcdcda" stroke="#dcdcda" opacity="0.17">D3</text><text transform="matrix(0.1138 0.0006 0.0539 0.0506 771.0 348.4)" fill="#e0e0e0" stroke="#e0e0e0" opacity="0.17">D4</text><text transform="matrix(0.1139 0.0006 0.0592 0.0507 793.8 348.5)" fill="#dcdcda" stroke="#dcdcda" opacity="0.17">D5</text><text transform="matrix(0.1140 0.0006 0.0645 0.0507 816.6 348.7)" fill="#e0e0e0" stroke="#e0e0e0" opacity="0.17">D6</text><text transform="matrix(0.1141 0.0006 0.0698 0.0508 839.4 348.8)" fill="#dcdcda" stroke="#dcdcda" opacity="0.17">D7</text><text transform="matrix(0.1059 0.0006 -0.0638 0.0450 245.7 336.1)" fill="#dcdcda" stroke="#dcdcda" opacity="0.06">C4</text><text transform="matrix(0.1060 0.0006 -0.0592 0.0451 266.9 336.2)" fill="#e0e0e0" stroke="#e0e0e0" opacity="0.06">C5</text><text transform="matrix(0.1061 0.0006 -0.0546 0.0451 288.1 336.3)" fill="#dcdcda" stroke="#dcdcda" opacity="0.06">C6</text><text transform="matrix(0.1063 0.0006 -0.0500 0.0452 309.4 336.4)" fill="#e0e0e0" stroke="#e0e0e0" opacity="0.06">C7</text><text transform="matrix(0.1064 0.0006 -0.0453 0.0452 330.6 336.5)" fill="#dcdcda" stroke="#dcdcda" opacity="0.06">C8</text><text transform="matrix(0.1065 0.0006 -0.0407 0.0453 351.9 336.6)" fill="#e0e0e0" stroke="#e0e0e0" opacity="0.06">C1</text><text transform="matrix(0.1066 0.0006 -0.0361 0.0453 373.2 336.7)" fill="#dcdcda" stroke="#dcdcda" opacity="0.06">C2</text><text transform="matrix(0.1067 0.0006 -0.0314 0.0454 394.5 336.8)" fill="#e0e0e0" stroke="#e0e0e0" opacity="0.06">C3</text><text transform="matrix(0.1068 0.0006 -0.0268 0.0454 415.9 336.9)" fill="#dcdcda" stroke="#dcdcda" opacity="0.06">C4</text><text transform="matrix(0.1069 0.0006 -0.0221 0.0455 437.3 337.1)" fill="#e0e0e0" stroke="#e0e0e0" opacity="0.06">C5</text><text transform="matrix(0.1071 0.0006 -0.0174 0.0455 458.7 337.2)" fill="#dcdcda" stroke="#dcdcda" opacity="0.06">C6</text><text transform="matrix(0.1072 0.0006 -0.0127 0.0456 480.1 337.3)" fill="#e0e0e0" stroke="#e0e0e0" opacity="0.06">C7</text><text transform="matrix(0.1073 0.0006 -0.0080 0.0456 501.6 337.4)" fill="#dcdcda" stroke="#dcdcda" opacity="0.06">C8</text><text transform="matrix(0.1074 0.0006 -0.0033 0.0457 523.0 337.5)" fill="#e0e0e0" stroke="#e0e0e0" opacity="0.06">C1</text><text transform="matrix(0.1075 0.0006 0.0014 0.0457 544.5 337.6)" fill="#dcdcda" stroke="#dcdcda" opacity="0.06">C2</text><text transform="matrix(0.1076 0.0006 0.0062 0.0458 566.0 337.7)" fill="#e0e0e0" stroke="#e0e0e0" opacity="0.06">C3</text><text transform="matrix(0.1078 0.0006 0.0109 0.0458 587.6 337.8)" fill="#dcdcda" stroke="#dcdcda" opacity="0.06">C4</text><text transform="matrix(0.1079 0.0006 0.0157 0.0459 609.1 338.0)" fill="#e0e0e0" stroke="#e0e0e0" opacity="0.06">C5</text><text transform="matrix(0.1080 0.0006 0.0204 0.0459 630.7 338.1)" fill="#dcdcda" stroke="#dcdcda" opacity="0.06">C6</text><text transform="matrix(0.1081 0.0006 0.0252 0.0460 652.3 338.2)" fill="#e0e0e0" stroke="#e0e0e0" opacity="0.06">C7</text><text transform="matrix(0.1082 0.0006 0.0300 0.0460 674.0 338.3)" fill="#dcdcda" stroke="#dcdcda" opacity="0.06">C8</text><text transform="matrix(0.1083 0.0006 0.0348 0.0461 695.6 338.4)" fill="#e0e0e0" stroke="#e0e0e0" opacity="0.06">C1</text><text transform="matrix(0.1085 0.0006 0.0396 0.0461 717.3 338.5)" fill="#dcdcda" stroke="#dcdcda" opacity="0.06">C2</text><text transform="matrix(0.1086 0.0006 0.0444 0.0462 739.0 338.6)" fill="#e0e0e0" stroke="#e0e0e0" opacity="0.06">C3</text><text transform="matrix(0.1087 0.0006 0.0492 0.0462 760.7 338.7)" fill="#dcdcda" stroke="#dcdcda" opacity="0.06">C4</text><text transform="matrix(0.1088 0.0006 0.0541 0.0463 782.5 338.9)" fill="#e0e0e0" stroke="#e0e0e0" opacity="0.06">C5</text><text transform="matrix(0.1089 0.0006 0.0589 0.0463 804.3 339.0)" fill="#dcdcda" stroke="#dcdcda" opacity="0.06">C6</text><text transform="matrix(0.1091 0.0006 0.0638 0.0464 826.1 339.1)" fill="#e0e0e0" stroke="#e0e0e0" opacity="0.06">C7</text></g><rect x="246" y="165.7" width="573" height="274.3" fill="url(#fade)"/></g><filter id="b3" x="246" y="105" width="573" height="594" filterUnits="userSpaceOnUse"><feGaussianBlur stdDeviation="3"/></filter><g clip-path="url(#fl)"><path d="M583.9 319.6L603.0 326.0L649.0 327.6L642.8 310.8L623.9 305.3L583.2 304.0Z" fill="#3c3a30" opacity=".52"/><path d="M670.8 399.6L672.0 401.5L673.7 403.5L675.8 405.5L678.4 407.4L681.4 409.1L684.7 410.8L717.0 424.5L720.9 426.1L725.0 427.4L729.3 428.5L733.6 429.3L737.8 429.8L742.0 430.0L745.9 429.9L749.5 429.4L752.7 428.7L755.5 427.6L757.8 426.3L759.6 424.8L760.9 423.0L761.6 421.1L761.7 419.1L761.3 416.9L760.3 414.7L758.9 412.6L757.0 410.4L754.6 408.3L751.9 406.3L748.8 404.4L745.5 402.7L741.9 401.2L711.0 389.5L707.6 388.3L704.0 387.3L700.5 386.5L696.8 385.9L693.3 385.5L689.8 385.4L686.5 385.5L683.3 385.8L680.4 386.3L677.7 387.1L675.4 388.1L673.5 389.3L671.9 390.7L670.7 392.2L670.0 393.9L669.8 395.7L670.0 397.6Z" fill="#3c3a30" opacity=".52"/><path d="M318.0 449.6L313.6 451.9L309.5 454.5L305.7 457.3L302.4 460.5L299.6 463.8L297.4 467.3L295.8 470.9L294.8 474.5L294.6 478.2L295.0 481.7L296.2 485.0L298.2 488.2L300.9 491.0L304.2 493.5L308.2 495.5L312.7 497.1L317.7 498.2L323.1 498.7L328.7 498.7L334.4 498.1L340.2 497.0L345.8 495.3L351.2 493.2L356.2 490.7L360.8 487.8L364.8 484.7L368.3 481.3L371.2 477.7L373.3 474.1L374.8 470.5L375.6 466.9L375.7 463.4L375.2 460.1L374.0 457.0L372.2 454.2L369.8 451.6L366.9 449.3L363.6 447.4L359.9 445.9L355.8 444.7L351.4 443.9L346.8 443.5L342.1 443.6L337.2 444.0L332.3 444.8L327.4 446.0L322.6 447.6Z" fill="#3c3a30" opacity=".52"/><path d="M382.7 479.2L384.6 472.7L384.7 466.7L383.0 461.4L379.7 456.8L374.9 453.2L368.8 450.5L361.6 448.8L353.6 448.2L345.0 448.7L336.0 450.2L326.8 452.8L317.9 456.3L309.3 460.8L301.5 466.0L294.7 471.9L289.3 478.3L285.5 485.0L283.5 491.7L283.6 498.0L285.8 503.8L290.3 508.7L296.7 512.5L304.9 514.9L314.5 515.8L325.0 515.1L335.9 512.9L346.6 509.3L356.6 504.5L365.6 498.8L373.0 492.5L378.8 485.8Z" fill="#3c3a30" opacity=".4" filter="url(#b3)"/></g><path d="M607.0 287.5L655.6 288.9L648.5 274.7L604.2 273.5Z" fill="#ffffff"/><path d="M607.0 287.5L613.0 287.7L612.6 285.8L606.6 285.6ZM606.3 283.8L612.1 283.9L611.7 282.1L605.9 282.0ZM605.6 280.2L611.3 280.4L610.9 278.6L605.2 278.5ZM604.9 276.8L610.5 276.9L610.1 275.3L604.6 275.1ZM612.6 285.8L618.6 286.0L618.0 284.1L612.1 283.9ZM611.7 282.1L617.5 282.3L617.1 280.5L611.3 280.4ZM610.9 278.6L616.6 278.8L616.1 277.1L610.5 276.9ZM610.1 275.3L615.7 275.4L615.2 273.8L609.7 273.7ZM619.1 287.9L625.1 288.0L624.5 286.1L618.6 286.0ZM618.0 284.1L624.0 284.3L623.4 282.5L617.5 282.3ZM617.1 280.5L622.8 280.7L622.3 278.9L616.6 278.8ZM616.1 277.1L621.8 277.2L621.2 275.6L615.7 275.4ZM624.5 286.1L630.5 286.3L629.9 284.4L624.0 284.3ZM623.4 282.5L629.2 282.6L628.6 280.8L622.8 280.7ZM622.3 278.9L628.0 279.1L627.4 277.4L621.8 277.2ZM621.2 275.6L626.8 275.7L626.3 274.1L620.7 274.0ZM631.2 288.2L637.3 288.4L636.5 286.5L630.5 286.3ZM629.9 284.4L635.8 284.6L635.1 282.8L629.2 282.6ZM628.6 280.8L634.4 281.0L633.7 279.3L628.0 279.1ZM627.4 277.4L633.1 277.5L632.4 275.9L626.8 275.7ZM636.5 286.5L642.6 286.6L641.8 284.8L635.8 284.6ZM635.1 282.8L641.0 282.9L640.2 281.2L634.4 281.0ZM633.7 279.3L639.5 279.4L638.8 277.7L633.1 277.5ZM632.4 275.9L638.0 276.0L637.4 274.4L631.8 274.3ZM643.4 288.6L649.5 288.7L648.6 286.8L642.6 286.6ZM641.8 284.8L647.7 284.9L646.9 283.1L641.0 282.9ZM640.2 281.2L646.0 281.3L645.2 279.6L639.5 279.4ZM638.8 277.7L644.4 277.8L643.7 276.2L638.0 276.0ZM648.6 286.8L654.6 287.0L653.7 285.1L647.7 284.9ZM646.9 283.1L652.8 283.3L651.9 281.5L646.0 281.3ZM645.2 279.6L651.0 279.7L650.1 278.0L644.4 277.8ZM643.7 276.2L649.3 276.3L648.5 274.7L642.9 274.5Z" fill="#e9e9e6"/><path d="M600.7 309.4L603.0 326.0L607.0 287.5L604.2 273.5Z" fill="#a8a69c"/><path d="M600.7 309.4L601.0 311.4L601.4 307.0L601.1 305.2ZM601.6 300.8L601.8 302.6L602.3 298.2L602.0 296.4ZM602.4 291.9L602.7 293.7L603.2 289.2L602.9 287.4ZM603.3 282.9L603.6 284.6L604.1 279.9L603.8 278.2ZM601.4 307.0L601.7 309.0L602.1 304.5L601.8 302.6ZM602.3 298.2L602.6 300.1L603.0 295.5L602.7 293.7ZM603.2 289.2L603.5 290.9L603.9 286.3L603.6 284.6ZM604.1 279.9L604.4 281.6L604.9 276.8L604.6 275.1ZM601.2 313.3L601.5 315.3L602.0 310.9L601.7 309.0ZM602.1 304.5L602.4 306.5L602.9 301.9L602.6 300.1ZM603.0 295.5L603.3 297.4L603.8 292.7L603.5 290.9ZM603.9 286.3L604.3 288.1L604.7 283.3L604.4 281.6ZM602.0 310.9L602.2 312.9L602.7 308.4L602.4 306.5ZM602.9 301.9L603.2 303.9L603.6 299.3L603.3 297.4ZM603.8 292.7L604.1 294.6L604.6 289.9L604.3 288.1ZM604.7 283.3L605.1 285.1L605.6 280.2L605.2 278.5ZM601.8 317.4L602.1 319.4L602.5 315.0L602.2 312.9ZM602.7 308.4L603.0 310.4L603.5 305.9L603.2 303.9ZM603.6 299.3L603.9 301.2L604.4 296.5L604.1 294.6ZM604.6 289.9L604.9 291.7L605.4 286.9L605.1 285.1ZM602.5 315.0L602.8 317.1L603.3 312.5L603.0 310.4ZM603.5 305.9L603.8 307.9L604.3 303.2L603.9 301.2ZM604.4 296.5L604.8 298.4L605.3 293.6L604.9 291.7ZM605.4 286.9L605.8 288.7L606.3 283.8L605.9 282.0ZM602.4 321.6L602.7 323.8L603.2 319.2L602.8 317.1ZM603.3 312.5L603.6 314.6L604.1 309.9L603.8 307.9ZM604.3 303.2L604.6 305.2L605.1 300.4L604.8 298.4ZM605.3 293.6L605.6 295.6L606.1 290.6L605.8 288.7ZM603.2 319.2L603.5 321.4L604.0 316.8L603.6 314.6ZM604.1 309.9L604.4 312.1L604.9 307.3L604.6 305.2ZM605.1 300.4L605.4 302.5L606.0 297.5L605.6 295.6ZM606.1 290.6L606.5 292.6L607.0 287.5L606.6 285.6Z" fill="#6e6c62"/><path d="M603.0 326.0L649.0 327.6L655.6 288.9L607.0 287.5Z" fill="#dad9d2"/><path d="M603.0 326.0L608.7 326.2L609.2 321.6L603.5 321.4ZM604.0 316.8L609.7 317.0L610.3 312.3L604.4 312.1ZM604.9 307.3L610.8 307.5L611.4 302.6L605.4 302.5ZM606.0 297.5L611.9 297.7L612.5 292.7L606.5 292.6ZM609.2 321.6L615.0 321.8L615.5 317.2L609.7 317.0ZM610.3 312.3L616.1 312.4L616.7 307.7L610.8 307.5ZM611.4 302.6L617.3 302.8L617.9 297.9L611.9 297.7ZM612.5 292.7L618.5 292.9L619.1 287.9L613.0 287.7ZM614.4 326.4L620.1 326.6L620.7 322.0L615.0 321.8ZM615.5 317.2L621.3 317.4L622.0 312.6L616.1 312.4ZM616.7 307.7L622.6 307.9L623.2 303.0L617.3 302.8ZM617.9 297.9L623.8 298.1L624.5 293.1L618.5 292.9ZM620.7 322.0L626.5 322.2L627.2 317.6L621.3 317.4ZM622.0 312.6L627.8 312.8L628.5 308.0L622.6 307.9ZM623.2 303.0L629.1 303.2L629.8 298.3L623.8 298.1ZM624.5 293.1L630.5 293.3L631.2 288.2L625.1 288.0ZM625.9 326.8L631.6 327.0L632.3 322.4L626.5 322.2ZM627.2 317.6L633.0 317.8L633.7 313.0L627.8 312.8ZM628.5 308.0L634.4 308.2L635.1 303.4L629.1 303.2ZM629.8 298.3L635.8 298.5L636.5 293.5L630.5 293.3ZM632.3 322.4L638.1 322.6L638.8 318.0L633.0 317.8ZM633.7 313.0L639.6 313.2L640.3 308.4L634.4 308.2ZM635.1 303.4L641.1 303.6L641.8 298.6L635.8 298.5ZM636.5 293.5L642.6 293.6L643.4 288.6L637.3 288.4ZM637.4 327.2L643.2 327.4L643.9 322.8L638.1 322.6ZM638.8 318.0L644.7 318.1L645.5 313.4L639.6 313.2ZM640.3 308.4L646.2 308.6L647.0 303.8L641.1 303.6ZM641.8 298.6L647.8 298.8L648.7 293.8L642.6 293.6ZM643.9 322.8L649.8 323.0L650.6 318.3L644.7 318.1ZM645.5 313.4L651.4 313.6L652.2 308.8L646.2 308.6ZM647.0 303.8L653.0 303.9L653.9 299.0L647.8 298.8ZM648.7 293.8L654.7 294.0L655.6 288.9L649.5 288.7Z" fill="#908e84"/><clipPath id="cy"><path d="M699.6 407.4L699.6 405.9L700.0 404.6L712.9 358.1L713.5 356.9L714.4 355.8L715.6 354.8L717.1 354.0L718.8 353.2L720.7 352.5L722.9 352.0L725.2 351.6L727.8 351.3L730.4 351.1L733.3 351.0L736.2 351.1L739.2 351.3L742.3 351.6L745.4 352.1L748.6 352.7L751.7 353.4L754.8 354.2L757.8 355.1L760.8 356.1L763.6 357.2L766.3 358.4L768.9 359.7L771.2 361.0L773.4 362.4L775.2 363.8L776.9 365.3L778.2 366.7L779.3 368.2L780.0 369.7L780.4 371.1L780.4 372.5L780.1 373.9L761.3 422.1L760.6 423.5L759.6 424.8L758.3 426.0L756.7 427.0L754.8 427.9L752.7 428.7L750.3 429.3L747.7 429.7L744.9 430.0L742.0 430.0L738.9 429.9L735.7 429.6L732.5 429.1L729.3 428.5L726.1 427.7L723.0 426.8L719.9 425.7L717.0 424.5L714.2 423.1L711.6 421.7L709.2 420.2L707.1 418.7L705.2 417.1L703.5 415.4L702.2 413.8L701.1 412.1L700.3 410.5L699.8 408.9Z"/></clipPath><g clip-path="url(#cy)"><path d="M702.7 400.9L701.5 402.0L700.6 403.2L700.0 404.6L699.6 405.9L701.2 400.5L701.5 399.1L702.1 397.8L703.0 396.6L704.2 395.5Z" fill="rgb(113,113,105)"/><path d="M704.2 395.5L703.0 396.6L702.1 397.8L701.5 399.1L701.2 400.5L702.7 394.9L703.1 393.6L703.7 392.3L704.6 391.1L705.8 390.0Z" fill="rgb(153,153,148)"/><path d="M705.8 390.0L704.6 391.1L703.7 392.3L703.1 393.6L702.7 394.9L704.3 389.3L704.6 387.9L705.3 386.7L706.2 385.5L707.3 384.4Z" fill="rgb(113,113,105)"/><path d="M707.3 384.4L706.2 385.5L705.3 386.7L704.6 387.9L704.3 389.3L705.9 383.5L706.2 382.2L706.8 380.9L707.8 379.8L708.9 378.7Z" fill="rgb(153,153,148)"/><path d="M708.9 378.7L707.8 379.8L706.8 380.9L706.2 382.2L705.9 383.5L707.5 377.6L707.8 376.3L708.5 375.1L709.4 374.0L710.6 372.9Z" fill="rgb(113,113,105)"/><path d="M710.6 372.9L709.4 374.0L708.5 375.1L707.8 376.3L707.5 377.6L709.2 371.7L709.5 370.4L710.1 369.2L711.0 368.0L712.2 367.0Z" fill="rgb(153,153,148)"/><path d="M712.2 367.0L711.0 368.0L710.1 369.2L709.5 370.4L709.2 371.7L710.9 365.6L711.2 364.3L711.8 363.1L712.7 362.0L713.9 361.0Z" fill="rgb(113,113,105)"/><path d="M713.9 361.0L712.7 362.0L711.8 363.1L711.2 364.3L710.9 365.6L712.6 359.3L712.9 358.1L713.5 356.9L714.4 355.8L715.6 354.8Z" fill="rgb(153,153,148)"/><path d="M699.6 405.9L699.6 407.4L699.8 408.9L700.3 410.5L701.1 412.1L702.6 406.6L701.8 405.0L701.3 403.5L701.1 401.9L701.2 400.5Z" fill="rgb(153,153,148)"/><path d="M701.2 400.5L701.1 401.9L701.3 403.5L701.8 405.0L702.6 406.6L704.2 401.0L703.4 399.4L702.9 397.9L702.6 396.4L702.7 394.9Z" fill="rgb(113,113,105)"/><path d="M702.7 394.9L702.6 396.4L702.9 397.9L703.4 399.4L704.2 401.0L705.9 395.3L705.0 393.7L704.5 392.2L704.2 390.7L704.3 389.3Z" fill="rgb(153,153,148)"/><path d="M704.3 389.3L704.2 390.7L704.5 392.2L705.0 393.7L705.9 395.3L707.5 389.4L706.7 387.9L706.1 386.4L705.8 384.9L705.9 383.5Z" fill="rgb(113,113,105)"/><path d="M705.9 383.5L705.8 384.9L706.1 386.4L706.7 387.9L707.5 389.4L709.2 383.5L708.3 381.9L707.7 380.5L707.5 379.0L707.5 377.6Z" fill="rgb(153,153,148)"/><path d="M707.5 377.6L707.5 379.0L707.7 380.5L708.3 381.9L709.2 383.5L710.9 377.4L710.0 375.9L709.4 374.4L709.2 373.0L709.2 371.7Z" fill="rgb(113,113,105)"/><path d="M709.2 371.7L709.2 373.0L709.4 374.4L710.0 375.9L710.9 377.4L712.7 371.2L711.8 369.7L711.2 368.3L710.9 366.9L710.9 365.6Z" fill="rgb(153,153,148)"/><path d="M710.9 365.6L710.9 366.9L711.2 368.3L711.8 369.7L712.7 371.2L714.5 364.9L713.5 363.4L712.9 362.0L712.6 360.7L712.6 359.3Z" fill="rgb(113,113,105)"/><path d="M701.1 412.1L702.2 413.8L703.5 415.4L705.2 417.1L707.1 418.7L708.7 413.1L706.8 411.5L705.1 409.9L703.8 408.2L702.6 406.6Z" fill="rgb(113,113,105)"/><path d="M702.6 406.6L703.8 408.2L705.1 409.9L706.8 411.5L708.7 413.1L710.4 407.4L708.5 405.8L706.8 404.2L705.4 402.6L704.2 401.0Z" fill="rgb(153,153,148)"/><path d="M704.2 401.0L705.4 402.6L706.8 404.2L708.5 405.8L710.4 407.4L712.2 401.6L710.2 400.0L708.4 398.4L707.0 396.8L705.9 395.3Z" fill="rgb(113,113,105)"/><path d="M705.9 395.3L707.0 396.8L708.4 398.4L710.2 400.0L712.2 401.6L713.9 395.6L711.9 394.1L710.1 392.6L708.7 391.0L707.5 389.4Z" fill="rgb(153,153,148)"/><path d="M707.5 389.4L708.7 391.0L710.1 392.6L711.9 394.1L713.9 395.6L715.7 389.6L713.7 388.1L711.9 386.6L710.4 385.0L709.2 383.5Z" fill="rgb(113,113,105)"/><path d="M709.2 383.5L710.4 385.0L711.9 386.6L713.7 388.1L715.7 389.6L717.5 383.5L715.4 382.0L713.6 380.4L712.1 378.9L710.9 377.4Z" fill="rgb(153,153,148)"/><path d="M710.9 377.4L712.1 378.9L713.6 380.4L715.4 382.0L717.5 383.5L719.4 377.2L717.3 375.7L715.4 374.2L713.9 372.7L712.7 371.2Z" fill="rgb(113,113,105)"/><path d="M712.7 371.2L713.9 372.7L715.4 374.2L717.3 375.7L719.4 377.2L721.3 370.8L719.1 369.3L717.3 367.8L715.7 366.4L714.5 364.9Z" fill="rgb(153,153,148)"/><path d="M707.1 418.7L709.2 420.2L711.6 421.7L714.2 423.1L717.0 424.5L718.8 418.8L716.0 417.5L713.3 416.1L710.9 414.6L708.7 413.1Z" fill="rgb(172,172,167)"/><path d="M708.7 413.1L710.9 414.6L713.3 416.1L716.0 417.5L718.8 418.8L720.6 413.1L717.7 411.8L715.1 410.4L712.6 408.9L710.4 407.4Z" fill="rgb(125,125,117)"/><path d="M710.4 407.4L712.6 408.9L715.1 410.4L717.7 411.8L720.6 413.1L722.4 407.2L719.6 405.9L716.9 404.5L714.4 403.1L712.2 401.6Z" fill="rgb(172,172,167)"/><path d="M712.2 401.6L714.4 403.1L716.9 404.5L719.6 405.9L722.4 407.2L724.3 401.2L721.4 399.9L718.7 398.6L716.2 397.1L713.9 395.6Z" fill="rgb(125,125,117)"/><path d="M713.9 395.6L716.2 397.1L718.7 398.6L721.4 399.9L724.3 401.2L726.3 395.1L723.3 393.8L720.6 392.5L718.0 391.1L715.7 389.6Z" fill="rgb(172,172,167)"/><path d="M715.7 389.6L718.0 391.1L720.6 392.5L723.3 393.8L726.3 395.1L728.2 388.9L725.3 387.6L722.4 386.3L719.9 384.9L717.5 383.5Z" fill="rgb(125,125,117)"/><path d="M717.5 383.5L719.9 384.9L722.4 386.3L725.3 387.6L728.2 388.9L730.3 382.5L727.2 381.3L724.4 380.0L721.8 378.6L719.4 377.2Z" fill="rgb(172,172,167)"/><path d="M719.4 377.2L721.8 378.6L724.4 380.0L727.2 381.3L730.3 382.5L732.3 376.0L729.2 374.8L726.4 373.5L723.7 372.2L721.3 370.8Z" fill="rgb(125,125,117)"/><path d="M717.0 424.5L719.9 425.7L723.0 426.8L726.1 427.7L729.3 428.5L731.2 422.8L728.0 422.0L724.8 421.1L721.7 420.0L718.8 418.8Z" fill="rgb(145,145,137)"/><path d="M718.8 418.8L721.7 420.0L724.8 421.1L728.0 422.0L731.2 422.8L733.2 417.0L729.9 416.2L726.7 415.3L723.6 414.2L720.6 413.1Z" fill="rgb(204,204,199)"/><path d="M720.6 413.1L723.6 414.2L726.7 415.3L729.9 416.2L733.2 417.0L735.2 411.1L731.9 410.3L728.6 409.4L725.5 408.4L722.4 407.2Z" fill="rgb(145,145,137)"/><path d="M722.4 407.2L725.5 408.4L728.6 409.4L731.9 410.3L735.2 411.1L737.3 405.1L733.9 404.3L730.6 403.4L727.4 402.4L724.3 401.2Z" fill="rgb(204,204,199)"/><path d="M724.3 401.2L727.4 402.4L730.6 403.4L733.9 404.3L737.3 405.1L739.4 398.9L736.0 398.2L732.6 397.3L729.4 396.2L726.3 395.1Z" fill="rgb(145,145,137)"/><path d="M726.3 395.1L729.4 396.2L732.6 397.3L736.0 398.2L739.4 398.9L741.5 392.6L738.1 391.9L734.7 391.0L731.4 390.0L728.2 388.9Z" fill="rgb(204,204,199)"/><path d="M728.2 388.9L731.4 390.0L734.7 391.0L738.1 391.9L741.5 392.6L743.7 386.2L740.2 385.5L736.8 384.6L733.5 383.6L730.3 382.5Z" fill="rgb(145,145,137)"/><path d="M730.3 382.5L733.5 383.6L736.8 384.6L740.2 385.5L743.7 386.2L745.9 379.7L742.4 378.9L738.9 378.1L735.5 377.1L732.3 376.0Z" fill="rgb(204,204,199)"/><path d="M729.3 428.5L732.5 429.1L735.7 429.6L738.9 429.9L742.0 430.0L744.0 424.3L740.9 424.2L737.7 423.9L734.5 423.5L731.2 422.8Z" fill="rgb(228,228,223)"/><path d="M731.2 422.8L734.5 423.5L737.7 423.9L740.9 424.2L744.0 424.3L746.1 418.5L743.0 418.4L739.8 418.1L736.5 417.6L733.2 417.0Z" fill="rgb(160,160,152)"/><path d="M733.2 417.0L736.5 417.6L739.8 418.1L743.0 418.4L746.1 418.5L748.3 412.6L745.1 412.5L741.9 412.2L738.5 411.7L735.2 411.1Z" fill="rgb(228,228,223)"/><path d="M735.2 411.1L738.5 411.7L741.9 412.2L745.1 412.5L748.3 412.6L750.5 406.5L747.3 406.4L744.0 406.1L740.6 405.7L737.3 405.1Z" fill="rgb(160,160,152)"/><path d="M737.3 405.1L740.6 405.7L744.0 406.1L747.3 406.4L750.5 406.5L752.7 400.3L749.5 400.2L746.2 400.0L742.8 399.5L739.4 398.9Z" fill="rgb(228,228,223)"/><path d="M739.4 398.9L742.8 399.5L746.2 400.0L749.5 400.2L752.7 400.3L755.0 394.0L751.7 393.9L748.4 393.7L744.9 393.2L741.5 392.6Z" fill="rgb(160,160,152)"/><path d="M741.5 392.6L744.9 393.2L748.4 393.7L751.7 393.9L755.0 394.0L757.3 387.6L754.0 387.5L750.6 387.2L747.2 386.8L743.7 386.2Z" fill="rgb(228,228,223)"/><path d="M743.7 386.2L747.2 386.8L750.6 387.2L754.0 387.5L757.3 387.6L759.7 381.0L756.4 380.9L752.9 380.7L749.4 380.2L745.9 379.7Z" fill="rgb(160,160,152)"/><path d="M742.0 430.0L744.9 430.0L747.7 429.7L750.3 429.3L752.7 428.7L754.9 423.0L752.4 423.6L749.8 424.0L747.0 424.3L744.0 424.3Z" fill="rgb(169,169,161)"/><path d="M744.0 424.3L747.0 424.3L749.8 424.0L752.4 423.6L754.9 423.0L757.1 417.2L754.6 417.8L752.0 418.2L749.1 418.4L746.1 418.5Z" fill="rgb(240,240,235)"/><path d="M746.1 418.5L749.1 418.4L752.0 418.2L754.6 417.8L757.1 417.2L759.3 411.3L756.9 411.9L754.2 412.3L751.3 412.5L748.3 412.6Z" fill="rgb(169,169,161)"/><path d="M748.3 412.6L751.3 412.5L754.2 412.3L756.9 411.9L759.3 411.3L761.6 405.2L759.1 405.8L756.4 406.2L753.5 406.5L750.5 406.5Z" fill="rgb(240,240,235)"/><path d="M750.5 406.5L753.5 406.5L756.4 406.2L759.1 405.8L761.6 405.2L763.9 399.1L761.5 399.6L758.7 400.0L755.8 400.3L752.7 400.3Z" fill="rgb(169,169,161)"/><path d="M752.7 400.3L755.8 400.3L758.7 400.0L761.5 399.6L763.9 399.1L766.3 392.8L763.8 393.4L761.1 393.7L758.1 394.0L755.0 394.0Z" fill="rgb(240,240,235)"/><path d="M755.0 394.0L758.1 394.0L761.1 393.7L763.8 393.4L766.3 392.8L768.8 386.4L766.2 386.9L763.5 387.3L760.5 387.5L757.3 387.6Z" fill="rgb(169,169,161)"/><path d="M757.3 387.6L760.5 387.5L763.5 387.3L766.2 386.9L768.8 386.4L771.3 379.8L768.7 380.4L765.9 380.8L762.9 381.0L759.7 381.0Z" fill="rgb(240,240,235)"/><path d="M752.7 428.7L754.8 427.9L756.7 427.0L758.3 426.0L759.6 424.8L761.8 419.1L760.5 420.3L758.9 421.3L757.0 422.2L754.9 423.0Z" fill="rgb(239,239,234)"/><path d="M754.9 423.0L757.0 422.2L758.9 421.3L760.5 420.3L761.8 419.1L764.1 413.4L762.8 414.5L761.1 415.6L759.2 416.5L757.1 417.2Z" fill="rgb(168,168,160)"/><path d="M757.1 417.2L759.2 416.5L761.1 415.6L762.8 414.5L764.1 413.4L766.4 407.5L765.0 408.6L763.4 409.7L761.5 410.5L759.3 411.3Z" fill="rgb(239,239,234)"/><path d="M759.3 411.3L761.5 410.5L763.4 409.7L765.0 408.6L766.4 407.5L768.7 401.5L767.4 402.6L765.7 403.6L763.8 404.5L761.6 405.2Z" fill="rgb(168,168,160)"/><path d="M761.6 405.2L763.8 404.5L765.7 403.6L767.4 402.6L768.7 401.5L771.1 395.4L769.8 396.5L768.1 397.5L766.2 398.4L763.9 399.1Z" fill="rgb(239,239,234)"/><path d="M763.9 399.1L766.2 398.4L768.1 397.5L769.8 396.5L771.1 395.4L773.5 389.1L772.2 390.3L770.5 391.2L768.6 392.1L766.3 392.8Z" fill="rgb(168,168,160)"/><path d="M766.3 392.8L768.6 392.1L770.5 391.2L772.2 390.3L773.5 389.1L776.0 382.8L774.7 383.9L773.0 384.8L771.0 385.7L768.8 386.4Z" fill="rgb(239,239,234)"/><path d="M768.8 386.4L771.0 385.7L773.0 384.8L774.7 383.9L776.0 382.8L778.5 376.3L777.2 377.4L775.5 378.3L773.5 379.1L771.3 379.8Z" fill="rgb(168,168,160)"/><path d="M759.6 424.8L760.6 423.5L761.3 422.1L761.7 420.6L761.7 419.1L763.9 413.5L763.9 415.0L763.5 416.5L762.8 417.8L761.8 419.1Z" fill="rgb(159,159,151)"/><path d="M761.8 419.1L762.8 417.8L763.5 416.5L763.9 415.0L763.9 413.5L766.1 407.8L766.1 409.3L765.7 410.7L765.1 412.1L764.1 413.4Z" fill="rgb(226,226,221)"/><path d="M764.1 413.4L765.1 412.1L765.7 410.7L766.1 409.3L766.1 407.8L768.4 402.0L768.4 403.4L768.0 404.9L767.4 406.2L766.4 407.5Z" fill="rgb(159,159,151)"/><path d="M766.4 407.5L767.4 406.2L768.0 404.9L768.4 403.4L768.4 402.0L770.7 396.0L770.7 397.5L770.4 398.9L769.7 400.3L768.7 401.5Z" fill="rgb(226,226,221)"/><path d="M768.7 401.5L769.7 400.3L770.4 398.9L770.7 397.5L770.7 396.0L773.0 390.0L773.1 391.4L772.7 392.8L772.1 394.2L771.1 395.4Z" fill="rgb(159,159,151)"/><path d="M771.1 395.4L772.1 394.2L772.7 392.8L773.1 391.4L773.0 390.0L775.4 383.8L775.5 385.3L775.2 386.6L774.5 387.9L773.5 389.1Z" fill="rgb(226,226,221)"/><path d="M773.5 389.1L774.5 387.9L775.2 386.6L775.5 385.3L775.4 383.8L777.9 377.5L777.9 379.0L777.6 380.3L777.0 381.6L776.0 382.8Z" fill="rgb(159,159,151)"/><path d="M776.0 382.8L777.0 381.6L777.6 380.3L777.9 379.0L777.9 377.5L780.4 371.1L780.4 372.5L780.1 373.9L779.5 375.1L778.5 376.3Z" fill="rgb(226,226,221)"/></g><path d="M776.9 365.3L775.2 363.8L773.4 362.4L771.2 361.0L768.9 359.7L766.3 358.4L763.6 357.2L760.8 356.1L757.8 355.1L754.8 354.2L751.7 353.4L748.6 352.7L745.4 352.1L742.3 351.6L739.2 351.3L736.2 351.1L733.3 351.0L730.4 351.1L727.8 351.3L725.2 351.6L722.9 352.0L720.7 352.5L718.8 353.2L717.1 354.0L715.6 354.8L714.4 355.8L713.5 356.9L712.9 358.1L712.6 359.3L712.6 360.7L712.9 362.0L713.5 363.4L714.5 364.9L715.7 366.4L717.3 367.8L719.1 369.3L721.3 370.8L723.7 372.2L726.4 373.5L729.2 374.8L732.3 376.0L735.5 377.1L738.9 378.1L742.4 378.9L745.9 379.7L749.4 380.2L752.9 380.7L756.4 380.9L759.7 381.0L762.9 381.0L765.9 380.8L768.7 380.4L771.3 379.8L773.5 379.1L775.5 378.3L777.2 377.4L778.5 376.3L779.5 375.1L780.1 373.9L780.4 372.5L780.4 371.1L780.0 369.7L779.3 368.2L778.2 366.7Z" fill="#fbfbfa"/><clipPath id="sp"><path d="M291.4 461.2L291.4 459.5L291.5 457.7L292.0 454.1L292.2 452.4L292.6 450.8L293.1 449.2L293.8 447.6L295.1 444.3L295.8 442.8L296.6 441.4L298.6 438.3L299.5 437.1L300.4 435.9L302.9 433.2L303.8 432.2L304.8 431.3L307.5 429.0L308.4 428.3L311.4 426.3L312.2 425.8L315.3 424.1L318.6 422.6L322.0 421.3L325.6 420.3L329.2 419.6L332.7 419.1L333.4 419.1L337.1 418.9L338.0 419.0L341.7 419.2L342.8 419.3L346.3 419.9L347.7 420.2L348.9 420.6L352.4 421.6L353.7 422.2L355.1 422.8L358.2 424.3L359.6 425.1L360.9 425.9L362.1 426.8L364.8 428.9L366.0 430.0L367.1 431.1L368.2 432.3L370.3 434.9L371.3 436.2L372.2 437.5L372.9 438.9L373.6 440.3L375.0 443.5L375.6 444.9L376.0 446.4L376.4 447.9L376.6 449.5L377.1 453.0L377.2 454.5L377.3 456.0L377.2 457.6L377.0 459.1L376.5 462.8L376.2 464.2L375.8 465.6L375.3 467.0L374.0 470.6L373.5 471.9L372.8 473.1L370.7 476.6L370.0 477.6L369.3 478.6L366.6 481.8L365.9 482.6L362.8 485.6L359.1 488.4L354.9 490.8L350.3 493.0L345.5 494.7L340.6 496.0L335.8 496.8L331.1 497.0L326.7 496.7L325.4 496.6L324.2 496.3L319.9 495.4L318.5 495.1L317.2 494.6L313.1 493.0L311.7 492.3L310.4 491.6L306.9 489.3L305.5 488.4L304.2 487.4L303.0 486.3L301.9 485.1L299.2 482.2L298.1 480.9L297.1 479.5L296.3 478.1L294.6 474.6L293.8 473.1L293.2 471.5L292.7 469.9L292.3 468.2L291.7 464.5L291.5 462.8Z"/></clipPath><g clip-path="url(#sp)"><path d="M373.1 441.1L370.8 439.0L367.9 437.2L364.6 435.7L363.3 432.2L361.5 429.0L359.3 426.3L362.4 427.6L365.1 429.2L367.2 431.2L369.8 434.2L371.7 437.5Z" fill="rgb(177,177,173)"/><path d="M306.6 436.3L302.9 439.0L299.6 441.8L296.8 444.8L297.5 441.3L298.9 438.1L301.0 435.2L303.2 432.9L305.7 430.7L308.6 428.6L307.4 430.8L306.8 433.3Z" fill="rgb(176,176,172)"/><path d="M301.6 476.6L301.4 479.6L301.9 482.6L303.1 485.3L299.8 482.5L297.0 479.3L295.0 475.6L293.7 472.7L293.3 469.5L293.5 466.2L295.6 470.0L298.3 473.4Z" fill="rgb(168,168,164)"/><path d="M359.3 426.3L355.8 425.3L351.9 424.6L347.7 424.3L345.7 422.1L343.5 420.5L341.1 419.4L344.4 419.7L347.4 420.2L350.2 421.0L353.6 422.2L356.7 424.0Z" fill="rgb(190,190,186)"/><path d="M315.8 490.2L317.3 492.0L319.2 493.6L321.6 494.9L317.7 494.5L314.0 493.4L310.6 491.6L307.5 489.9L305.0 487.7L303.1 485.3L306.9 487.5L311.2 489.1Z" fill="rgb(168,168,164)"/><path d="M376.5 460.5L376.1 457.8L375.0 455.3L373.5 453.0L373.9 448.9L373.8 444.9L373.1 441.1L374.8 443.5L376.0 446.2L376.5 449.1L377.2 452.9L377.2 456.7Z" fill="rgb(168,168,164)"/><path d="M368.8 478.3L369.9 475.9L370.6 473.5L370.7 471.2L373.3 467.8L375.2 464.2L376.5 460.5L376.3 463.5L375.6 466.5L374.1 469.7L373.0 472.9L371.2 475.7Z" fill="rgb(168,168,164)"/><path d="M330.1 420.3L326.3 421.1L322.6 422.2L318.8 423.5L319.2 422.5L319.8 422.1L320.7 422.4L322.8 421.6L324.9 421.0L327.1 420.6L328.0 419.8L329.0 419.7Z" fill="rgb(147,147,141)"/><path d="M296.8 444.8L294.5 447.9L292.9 451.0L291.9 454.1L292.9 450.0L294.8 446.0L297.3 442.1L298.1 439.8L299.3 437.5L301.0 435.2L298.9 438.1L297.5 441.3Z" fill="rgb(133,133,127)"/><path d="M318.8 423.5L315.2 425.0L311.8 426.7L308.6 428.6L310.3 427.0L312.5 425.8L315.1 425.2L316.8 424.2L318.7 423.2L320.7 422.4L319.8 422.1L319.2 422.5Z" fill="rgb(204,204,200)"/><path d="M293.5 466.2L293.3 469.5L293.7 472.7L295.0 475.6L293.6 471.6L293.0 467.2L293.2 462.6L292.0 460.0L291.6 457.1L291.9 454.1L291.7 458.2L292.2 462.3Z" fill="rgb(123,123,117)"/><path d="M341.1 419.4L337.6 419.4L333.9 419.7L330.1 420.3L329.0 419.7L328.0 419.8L327.1 420.6L329.2 420.3L331.2 420.1L333.2 420.1L335.9 419.2L338.5 419.0Z" fill="rgb(209,209,205)"/><path d="M367.2 431.2L365.1 429.2L362.4 427.6L359.3 426.3L356.7 424.0L353.6 422.2L350.2 421.0L352.6 422.0L354.7 423.3L356.3 424.7L360.5 426.4L364.1 428.6Z" fill="rgb(146,146,140)"/><path d="M321.6 494.9L324.4 495.9L327.5 496.6L330.9 496.9L328.2 496.8L325.6 495.9L323.2 494.3L318.6 493.9L314.3 493.0L310.6 491.6L314.0 493.4L317.7 494.5Z" fill="rgb(121,121,115)"/><path d="M376.5 449.1L376.0 446.2L374.8 443.5L373.1 441.1L371.7 437.5L369.8 434.2L367.2 431.2L368.8 433.4L369.9 435.9L370.3 438.5L373.0 441.9L375.1 445.4Z" fill="rgb(139,139,133)"/><path d="M362.8 485.5L365.3 483.2L367.3 480.7L368.8 478.3L371.2 475.7L373.0 472.9L374.1 469.7L372.1 472.9L369.5 476.1L366.3 479.1L365.6 481.7L364.4 483.9Z" fill="rgb(121,121,115)"/><path d="M303.1 485.3L305.0 487.7L307.5 489.9L310.6 491.6L307.7 489.2L305.2 486.1L303.2 482.5L299.7 480.6L297.0 478.3L295.0 475.6L297.0 479.3L299.8 482.5Z" fill="rgb(121,121,115)"/><path d="M308.6 428.6L305.7 430.7L303.2 432.9L301.0 435.2L303.8 432.6L307.1 430.4L311.0 428.7L312.1 427.5L313.5 426.3L315.1 425.2L312.5 425.8L310.3 427.0Z" fill="rgb(148,148,142)"/><path d="M350.2 421.0L347.4 420.2L344.4 419.7L341.1 419.4L338.5 419.0L335.9 419.2L333.2 420.1L335.1 420.2L336.8 420.5L338.3 420.9L342.5 420.3L346.5 420.3Z" fill="rgb(155,155,149)"/><path d="M374.1 469.7L375.6 466.5L376.3 463.5L376.5 460.5L377.2 456.7L377.2 452.9L376.5 449.1L376.3 452.2L375.4 455.5L373.8 458.9L374.6 462.6L374.7 466.3Z" fill="rgb(130,130,124)"/><path d="M330.9 496.9L334.5 496.9L338.3 496.5L342.2 495.8L341.1 495.5L339.8 494.5L338.5 492.8L333.2 493.8L328.1 494.3L323.2 494.3L325.6 495.9L328.2 496.8Z" fill="rgb(168,168,164)"/><path d="M353.5 491.7L356.9 489.9L360.0 487.8L362.8 485.5L364.4 483.9L365.6 481.7L366.3 479.1L362.5 482.1L358.3 484.9L353.7 487.4L354.0 489.4L353.9 490.9Z" fill="rgb(168,168,164)"/><path d="M291.9 454.1L291.6 457.1L292.0 460.0L293.2 462.6L294.2 457.9L295.9 453.1L298.4 448.4L297.5 446.5L297.2 444.3L297.3 442.1L294.8 446.0L292.9 450.0Z" fill="rgb(198,198,194)"/><path d="M301.0 435.2L299.3 437.5L298.1 439.8L297.3 442.1L300.6 438.5L304.6 435.3L309.1 432.4L309.5 431.2L310.1 430.0L311.0 428.7L307.1 430.4L303.8 432.6Z" fill="rgb(213,213,209)"/><path d="M342.2 495.8L346.1 494.7L349.8 493.4L353.5 491.7L353.9 490.9L354.0 489.4L353.7 487.4L348.8 489.5L343.7 491.4L338.5 492.8L339.8 494.5L341.1 495.5Z" fill="rgb(121,121,115)"/><path d="M356.3 424.7L354.7 423.3L352.6 422.0L350.2 421.0L346.5 420.3L342.5 420.3L338.3 420.9L339.6 421.5L340.7 422.2L341.6 423.1L346.8 423.0L351.8 423.6Z" fill="rgb(226,226,222)"/><path d="M370.3 438.5L369.9 435.9L368.8 433.4L367.2 431.2L364.1 428.6L360.5 426.4L356.3 424.7L357.5 426.5L358.3 428.3L358.5 430.4L363.0 432.7L366.9 435.5Z" fill="rgb(218,218,214)"/><path d="M295.0 475.6L297.0 478.3L299.7 480.6L303.2 482.5L301.8 478.3L301.0 473.8L300.9 468.8L297.6 467.1L295.1 465.0L293.2 462.6L293.0 467.2L293.6 471.6Z" fill="rgb(187,187,183)"/><path d="M310.6 491.6L314.3 493.0L318.6 493.9L323.2 494.3L320.9 492.0L318.8 489.0L317.1 485.4L311.9 484.9L307.3 484.0L303.2 482.5L305.2 486.1L307.7 489.2Z" fill="rgb(175,175,171)"/><path d="M327.1 420.6L324.9 421.0L322.8 421.6L320.7 422.4L321.9 423.2L323.4 424.7L325.2 426.8L325.2 426.8L325.2 426.8L325.2 426.8L325.6 424.1L326.3 422.0Z" fill="rgb(231,231,227)"/><path d="M320.7 422.4L318.7 423.2L316.8 424.2L315.1 425.2L318.1 425.2L321.5 425.7L325.2 426.8L325.2 426.8L325.2 426.8L325.2 426.8L323.4 424.7L321.9 423.2Z" fill="rgb(165,165,159)"/><path d="M373.8 458.9L375.4 455.5L376.3 452.2L376.5 449.1L375.1 445.4L373.0 441.9L370.3 438.5L370.0 441.4L369.2 444.3L367.6 447.4L370.3 451.2L372.4 455.1Z" fill="rgb(209,209,205)"/><path d="M333.2 420.1L331.2 420.1L329.2 420.3L327.1 420.6L326.3 422.0L325.6 424.1L325.2 426.8L325.2 426.8L325.2 426.8L325.2 426.8L327.8 423.9L330.5 421.6Z" fill="rgb(167,167,161)"/><path d="M366.3 479.1L369.5 476.1L372.1 472.9L374.1 469.7L374.7 466.3L374.6 462.6L373.8 458.9L371.6 462.3L368.6 465.7L365.1 469.0L366.0 472.7L366.4 476.1Z" fill="rgb(192,192,188)"/><path d="M315.1 425.2L313.5 426.3L312.1 427.5L311.0 428.7L315.4 427.6L320.1 426.9L325.2 426.8L325.2 426.8L325.2 426.8L325.2 426.8L321.5 425.7L318.1 425.2Z" fill="rgb(232,232,228)"/><path d="M338.3 420.9L336.8 420.5L335.1 420.2L333.2 420.1L330.5 421.6L327.8 423.9L325.2 426.8L325.2 426.8L325.2 426.8L325.2 426.8L329.6 424.2L334.0 422.2Z" fill="rgb(235,235,231)"/><path d="M297.3 442.1L297.2 444.3L297.5 446.5L298.4 448.4L301.6 443.9L305.5 439.6L309.8 435.7L309.3 434.7L309.1 433.6L309.1 432.4L304.6 435.3L300.6 438.5Z" fill="rgb(159,159,153)"/><path d="M358.5 430.4L358.3 428.3L357.5 426.5L356.3 424.7L351.8 423.6L346.8 423.0L341.6 423.1L342.2 424.0L342.6 425.0L342.7 426.1L348.3 427.0L353.6 428.5Z" fill="rgb(169,169,163)"/><path d="M311.0 428.7L310.1 430.0L309.5 431.2L309.1 432.4L314.1 430.0L319.5 428.2L325.2 426.8L325.2 426.8L325.2 426.8L325.2 426.8L320.1 426.9L315.4 427.6Z" fill="rgb(168,168,162)"/><path d="M341.6 423.1L340.7 422.2L339.6 421.5L338.3 420.9L334.0 422.2L329.6 424.2L325.2 426.8L325.2 426.8L325.2 426.8L325.2 426.8L330.7 424.9L336.2 423.7Z" fill="rgb(171,171,165)"/><path d="M293.2 462.6L295.1 465.0L297.6 467.1L300.9 468.8L301.4 463.6L302.6 458.3L304.4 453.0L301.9 451.7L299.9 450.2L298.4 448.4L295.9 453.1L294.2 457.9Z" fill="rgb(153,153,147)"/><path d="M309.1 432.4L309.1 433.6L309.3 434.7L309.8 435.7L314.7 432.2L319.8 429.2L325.2 426.8L325.2 426.8L325.2 426.8L325.2 426.8L319.5 428.2L314.1 430.0Z" fill="rgb(237,237,233)"/><path d="M342.7 426.1L342.6 425.0L342.2 424.0L341.6 423.1L336.2 423.7L330.7 424.9L325.2 426.8L325.2 426.8L325.2 426.8L325.2 426.8L331.0 426.0L336.9 425.8Z" fill="rgb(242,242,238)"/><path d="M323.2 494.3L328.1 494.3L333.2 493.8L338.5 492.8L337.1 490.4L335.6 487.4L334.1 483.8L328.3 484.8L322.6 485.4L317.1 485.4L318.8 489.0L320.9 492.0Z" fill="rgb(135,135,129)"/><path d="M367.6 447.4L369.2 444.3L370.0 441.4L370.3 438.5L366.9 435.5L363.0 432.7L358.5 430.4L358.2 432.5L357.5 434.8L356.2 437.1L360.5 440.3L364.3 443.8Z" fill="rgb(166,166,160)"/><path d="M353.7 487.4L358.3 484.9L362.5 482.1L366.3 479.1L366.4 476.1L366.0 472.7L365.1 469.0L360.9 472.2L356.3 475.2L351.2 477.9L352.3 481.5L353.2 484.7Z" fill="rgb(142,142,136)"/><path d="M309.8 435.7L310.7 436.6L311.8 437.4L313.1 438.1L316.9 433.8L320.9 430.0L325.2 426.8L325.2 426.8L325.2 426.8L325.2 426.8L319.8 429.2L314.7 432.2Z" fill="rgb(172,172,166)"/><path d="M341.2 429.8L342.0 428.5L342.4 427.3L342.7 426.1L336.9 425.8L331.0 426.0L325.2 426.8L325.2 426.8L325.2 426.8L325.2 426.8L330.5 427.3L335.8 428.3Z" fill="rgb(175,175,169)"/><path d="M303.2 482.5L307.3 484.0L311.9 484.9L317.1 485.4L315.6 481.2L314.6 476.5L313.9 471.5L309.1 471.0L304.7 470.1L300.9 468.8L301.0 473.8L301.8 478.3Z" fill="rgb(146,146,140)"/><path d="M298.4 448.4L299.9 450.2L301.9 451.7L304.4 453.0L306.8 447.8L309.7 442.7L313.1 438.1L311.8 437.4L310.7 436.6L309.8 435.7L305.5 439.6L301.6 443.9Z" fill="rgb(231,231,227)"/><path d="M338.5 492.8L343.7 491.4L348.8 489.5L353.7 487.4L353.2 484.7L352.3 481.5L351.2 477.9L345.7 480.2L340.0 482.2L334.1 483.8L335.6 487.4L337.1 490.4Z" fill="rgb(196,196,192)"/><path d="M356.2 437.1L357.5 434.8L358.2 432.5L358.5 430.4L353.6 428.5L348.3 427.0L342.7 426.1L342.4 427.3L342.0 428.5L341.2 429.8L346.4 431.8L351.5 434.3Z" fill="rgb(244,244,240)"/><path d="M365.1 469.0L368.6 465.7L371.6 462.3L373.8 458.9L372.4 455.1L370.3 451.2L367.6 447.4L365.4 450.5L362.6 453.6L359.2 456.6L361.7 460.9L363.6 465.1Z" fill="rgb(158,158,152)"/><path d="M313.1 438.1L314.7 438.6L316.5 438.9L318.5 439.0L320.5 434.4L322.7 430.3L325.2 426.8L325.2 426.8L325.2 426.8L325.2 426.8L320.9 430.0L316.9 433.8Z" fill="rgb(244,244,240)"/><path d="M337.3 433.4L338.9 432.2L340.2 431.0L341.2 429.8L335.8 428.3L330.5 427.3L325.2 426.8L325.2 426.8L325.2 426.8L325.2 426.8L329.1 428.5L333.2 430.7Z" fill="rgb(247,247,243)"/><path d="M318.5 439.0L320.6 439.0L322.8 438.8L325.0 438.5L324.9 434.1L324.9 430.2L325.2 426.8L325.2 426.8L325.2 426.8L325.2 426.8L322.7 430.3L320.5 434.4Z" fill="rgb(176,176,170)"/><path d="M331.7 436.5L333.7 435.6L335.6 434.5L337.3 433.4L333.2 430.7L329.1 428.5L325.2 426.8L325.2 426.8L325.2 426.8L325.2 426.8L327.2 429.5L329.3 432.8Z" fill="rgb(178,178,172)"/><path d="M325.0 438.5L327.3 438.0L329.5 437.3L331.7 436.5L329.3 432.8L327.2 429.5L325.2 426.8L325.2 426.8L325.2 426.8L325.2 426.8L324.9 430.2L324.9 434.1Z" fill="rgb(248,248,244)"/><path d="M300.9 468.8L304.7 470.1L309.1 471.0L313.9 471.5L313.6 466.1L313.8 460.5L314.4 454.9L310.7 454.6L307.4 453.9L304.4 453.0L302.6 458.3L301.4 463.6Z" fill="rgb(227,227,223)"/><path d="M304.4 453.0L307.4 453.9L310.7 454.6L314.4 454.9L315.4 449.4L316.7 444.1L318.5 439.0L316.5 438.9L314.7 438.6L313.1 438.1L309.7 442.7L306.8 447.8Z" fill="rgb(172,172,166)"/><path d="M359.2 456.6L362.6 453.6L365.4 450.5L367.6 447.4L364.3 443.8L360.5 440.3L356.2 437.1L354.4 439.4L352.1 441.8L349.4 444.0L353.0 448.1L356.3 452.3Z" fill="rgb(241,241,237)"/><path d="M349.4 444.0L352.1 441.8L354.4 439.4L356.2 437.1L351.5 434.3L346.4 431.8L341.2 429.8L340.2 431.0L338.9 432.2L337.3 433.4L341.5 436.6L345.5 440.1Z" fill="rgb(179,179,173)"/><path d="M317.1 485.4L322.6 485.4L328.3 484.8L334.1 483.8L332.7 479.6L331.3 475.0L329.9 470.0L324.4 470.9L319.0 471.4L313.9 471.5L314.6 476.5L315.6 481.2Z" fill="rgb(217,217,213)"/><path d="M351.2 477.9L356.3 475.2L360.9 472.2L365.1 469.0L363.6 465.1L361.7 460.9L359.2 456.6L355.3 459.5L350.8 462.2L346.0 464.6L348.0 469.3L349.7 473.8Z" fill="rgb(226,226,222)"/><path d="M334.1 483.8L340.0 482.2L345.7 480.2L351.2 477.9L349.7 473.8L348.0 469.3L346.0 464.6L340.8 466.8L335.4 468.6L329.9 470.0L331.3 475.0L332.7 479.6Z" fill="rgb(161,161,155)"/><path d="M314.4 454.9L318.3 454.9L322.5 454.5L326.7 453.8L325.9 448.5L325.4 443.3L325.0 438.5L322.8 438.8L320.6 439.0L318.5 439.0L316.7 444.1L315.4 449.4Z" fill="rgb(248,248,244)"/><path d="M339.1 449.9L342.8 448.1L346.3 446.1L349.4 444.0L345.5 440.1L341.5 436.6L337.3 433.4L335.6 434.5L333.7 435.6L331.7 436.5L334.1 440.7L336.6 445.2Z" fill="rgb(253,253,249)"/><path d="M313.9 471.5L319.0 471.4L324.4 470.9L329.9 470.0L328.7 464.7L327.6 459.3L326.7 453.8L322.5 454.5L318.3 454.9L314.4 454.9L313.8 460.5L313.6 466.1Z" fill="rgb(170,170,164)"/><path d="M326.7 453.8L330.9 452.8L335.1 451.5L339.1 449.9L336.6 445.2L334.1 440.7L331.7 436.5L329.5 437.3L327.3 438.0L325.0 438.5L325.4 443.3L325.9 448.5Z" fill="rgb(181,181,175)"/><path d="M346.0 464.6L350.8 462.2L355.3 459.5L359.2 456.6L356.3 452.3L353.0 448.1L349.4 444.0L346.3 446.1L342.8 448.1L339.1 449.9L341.5 454.8L343.8 459.8Z" fill="rgb(176,176,170)"/><path d="M329.9 470.0L335.4 468.6L340.8 466.8L346.0 464.6L343.8 459.8L341.5 454.8L339.1 449.9L335.1 451.5L330.9 452.8L326.7 453.8L327.6 459.3L328.7 464.7Z" fill="rgb(244,244,240)"/></g></g><rect x="613.65" y="117.65" width="12.700" height="8.700" rx=".8" fill="none" stroke="#9a9a9a" stroke-width="1.300"/><path d="M618.5 127h3v1.600h2.500v1.200h-8v-1.200h2.500z" fill="#9a9a9a"/><rect x="643.65" y="118.65" width="12.700" height="8.700" rx=".8" fill="none" stroke="#9a9a9a" stroke-width="1.300"/><rect x="673.65" y="118.65" width="12.700" height="8.700" rx=".8" fill="none" stroke="#9a9a9a" stroke-width="1.300"/><rect x="703.65" y="117.65" width="12.700" height="8.700" rx=".8" fill="none" stroke="#9a9a9a" stroke-width="1.300"/><path d="M708.5 127h3v1.600h2.500v1.200h-8v-1.200h2.500z" fill="#9a9a9a"/><circle cx="740" cy="123" r="3" fill="#9a9a9a"/><path d="M744.6 123.0L748.2 123.0" stroke="#9a9a9a" stroke-width="1.100"/><path d="M743.3 126.3L745.8 128.8" stroke="#9a9a9a" stroke-width="1.100"/><path d="M740.0 127.6L740.0 131.2" stroke="#9a9a9a" stroke-width="1.100"/><path d="M736.7 126.3L734.2 128.8" stroke="#9a9a9a" stroke-width="1.100"/><path d="M735.4 123.0L731.8 123.0" stroke="#9a9a9a" stroke-width="1.100"/><path d="M736.7 119.7L734.2 117.2" stroke="#9a9a9a" stroke-width="1.100"/><path d="M740.0 118.4L740.0 114.8" stroke="#9a9a9a" stroke-width="1.100"/><path d="M743.3 119.7L745.8 117.2" stroke="#9a9a9a" stroke-width="1.100"/><circle cx="770" cy="123" r="3" fill="#9a9a9a"/><path d="M774.6 123.0L778.2 123.0" stroke="#9a9a9a" stroke-width="1.100"/><path d="M773.3 126.3L775.8 128.8" stroke="#9a9a9a" stroke-width="1.100"/><path d="M770.0 127.6L770.0 131.2" stroke="#9a9a9a" stroke-width="1.100"/><path d="M766.7 126.3L764.2 128.8" stroke="#9a9a9a" stroke-width="1.100"/><path d="M765.4 123.0L761.8 123.0" stroke="#9a9a9a" stroke-width="1.100"/><path d="M766.7 119.7L764.2 117.2" stroke="#9a9a9a" stroke-width="1.100"/><path d="M770.0 118.4L770.0 114.8" stroke="#9a9a9a" stroke-width="1.100"/><path d="M773.3 119.7L775.8 117.2" stroke="#9a9a9a" stroke-width="1.100"/><rect x="793" y="118" width="10" height="10" rx="1.500" fill="#9a9a9a"/><path d="M803 122l4.500-3v8l-4.500-3z" fill="#9a9a9a"/><text x="251" y="691" font-family="Liberation Sans, sans-serif" font-size="15.2" fill="#0a32f5">www.historian.by</text></svg>
<div class="panel" style="left:825px;top:59px;width:195px;height:209px">
<div class="ptitle"><div class="t" style="top:3px">Объекты</div><svg style="left:143px;top:0" width="46" height="19" viewBox="0 0 46 19"><path d="M4 8h7.500l-3.750 4z" fill="#9c9c9c"/><path d="M21.500 4.500h4v6h-4zM24.500 4.500v6M19.500 10.500h8M23.500 10.500v4" stroke="#a8a8a8" stroke-width="1" fill="none"/><path d="M35.500 5.500l8 8M43.500 5.500l-8 8" stroke="#b4b4b4" stroke-width="1.700"/></svg></div>
<svg style="left:3px;top:24px" width="16" height="16" viewBox="0 0 16 16"><path d="M1 14.500l8-8" stroke="#f2f2f2" stroke-width="2.200" stroke-linecap="round"/><path d="M9.500 6.500a3.300 3.300 0 0 1 1-4.800c1-.6 2.200-.7 3-.4l-2.300 2.300.3 1.900 1.900.3 2.300-2.300c.3 1 .2 2-.4 3a3.300 3.300 0 0 1-4.800 1z" fill="#f2f2f2"/><path d="M2 1l1 .2 4.500 4.800-1.300 1.300-4.800-4.500z" fill="#e8e8e8"/><path d="M7 7l7.500 7.500" stroke="#3b8fe0" stroke-width="2.200" stroke-linecap="round"/></svg>
<svg style="left:23px;top:24px" width="16" height="16" viewBox="0 0 16 16"><path d="M4.500 .5l4.500 4-4 4.500-4.500-4z" fill="#e8c83a" stroke="#a88a18" stroke-width=".6"/><path d="M8 6.500h2.500v5.500h2" stroke="#9a9a9a" fill="none"/><path d="M12 4.500l2.500 2.200-2.200 2.500-2.500-2.200z" fill="#3cc0f0" stroke="#1c80b0" stroke-width=".5"/><path d="M13 10l2.500 2.200-2.200 2.500-2.500-2.200z" fill="#f070c0" stroke="#b03888" stroke-width=".5"/></svg>
<svg style="left:49px;top:24px" width="16" height="16" viewBox="0 0 16 16"><path d="M1 .5h8.500l3.500 3.500v11.500h-12z" fill="#f4f4f4" stroke="#b0b0b0" stroke-width=".8"/><path d="M9.500 .5v3.500h3.500" fill="#d8d8d8" stroke="#b0b0b0" stroke-width=".8"/><path d="M6.500 15l1-3.500 6.500-6.500 2.300 2.300-6.500 6.500z" fill="#f0a830" stroke="#a06818" stroke-width=".7"/><path d="M13 6l2.300 2.300 1-1-2.300-2.300z" fill="#e86aa0"/><path d="M6.500 15l.8-2.600 1.800 1.800z" fill="#444"/></svg>
<svg style="left:70px;top:24px" width="16" height="16" viewBox="0 0 16 16"><rect x="4.500" y="1.500" width="11" height="9" fill="#dfeaf6" stroke="#3c78c8"/><rect x="4.500" y="1.500" width="11" height="2.500" fill="#4a8ade"/><rect x="2.500" y="3.500" width="11" height="9" fill="#dfeaf6" stroke="#3c78c8"/><rect x="2.500" y="3.500" width="11" height="2.500" fill="#4a8ade"/><rect x=".5" y="5.500" width="11" height="9.500" fill="#f4f8fc" stroke="#3c78c8"/><rect x=".5" y="5.500" width="11" height="2.500" fill="#4a8ade"/></svg>
<svg style="left:95px;top:24px" width="16" height="16" viewBox="0 0 16 16"><path d="M2 .5h7l3.500 3.500v11h-10.500z" fill="#f4f4f4" stroke="#b8b8b8"/><path d="M9 .5v3.500h3.500" fill="#dcdcdc" stroke="#b8b8b8"/><path d="M11.500 7.500l1.300 2.700 3 .4-2.200 2.100.6 3-2.700-1.500-2.700 1.500.6-3-2.200-2.100 3-.4z" fill="#f7b322" stroke="#d98c10" stroke-width=".5"/></svg>
<svg style="left:115px;top:24px" width="16" height="16" viewBox="0 0 16 16"><path d="M2.500 3.500l9.500 9M12 3.500l-9.500 9" stroke="#757575" stroke-width="3"/></svg>
<svg style="left:135px;top:24px" width="16" height="16" viewBox="0 0 16 16"><rect x=".7" y="2.700" width="14.600" height="10.600" fill="#f6f6f6" stroke="#fff" stroke-width="1.400"/><rect x="2" y="4" width="12" height="8" fill="none" stroke="#333" stroke-width=".8"/><path d="M3.500 5.500h3M3.500 10.500h3M5 5.500v5" stroke="#111" stroke-width=".9" fill="none"/></svg>
<svg style="left:156px;top:24px" width="16" height="16" viewBox="0 0 16 16"><path d="M.5 .5h6.500l2.500 2.500v9.500h-9z" fill="#8a8a8a"/><path d="M4.500 3.500h6.500l3 3v9h-9.500z" fill="#949494" stroke="#666"/><path d="M6 8h6.500M6 10h6.500M6 12h6.500M6 14h6.500" stroke="#6a6a6a" stroke-width=".9"/></svg>
<div class="a" style="left:44px;top:23px;width:1px;height:17px;background:#4a4a4a"></div>
<div class="a" style="left:90px;top:23px;width:1px;height:17px;background:#4a4a4a"></div>
<div class="hl" style="left:0;right:0;top:43px"></div>
<div class="a dark" style="left:0;top:44px;width:176px;height:148px;overflow:hidden;font-size:11px;letter-spacing:-.2px">
<div class="a" style="left:0;top:0;width:176px;height:18px;background:#3b3b3b"></div>
<div class="exp" style="left:7px;top:4px"></div>
<svg style="left:21px;top:2px" width="16" height="16" viewBox="0 0 16 16"><rect x=".5" y=".5" width="14" height="14" fill="#5ab8f0"/><path d="M.5 9l4-1 3 2 3-2 4.500 1v5.500h-14.500z" fill="#e8e0a0"/><path d="M.5 4h14M.5 8h14M.5 12h14M4 .5v14M8 .5v14M12 .5v14" stroke="#a8dcf8" stroke-width=".6"/><path d="M7.500 5v8" stroke="#111" stroke-width="1.100"/><path d="M7.500 7l2.500 4h-5z" fill="#111"/><rect x="10.500" y="2.500" width="3" height="2.500" fill="#e82020"/></svg>
<div class="t" style="left:41px;top:2px">'Корень' - Scene</div>
<svg style="left:39px;top:19px" width="16" height="16" viewBox="0 0 16 16"><rect x="1" y="4" width="11" height="8" rx="1" fill="#c8c8c8" stroke="#707070" stroke-width=".8"/><path d="M12 7l3.500-2.500v7l-3.500-2.500z" fill="#d8d8d8" stroke="#707070" stroke-width=".6"/><rect x="3" y="6" width="6" height="4" fill="#3a88e0"/><path d="M0 3.500h13" stroke="#b0b0b0" stroke-width="1.200"/><path d="M3 12v2.500M9 12v2.500" stroke="#a0a0a0"/></svg>
<div class="t" style="left:61px;top:20px">Camera Editor - Camera</div>
<svg style="left:39px;top:37px" width="16" height="16" viewBox="0 0 16 16"><circle cx="8" cy="6.200" r="5.700" fill="#fde6a4" stroke="#e2a444" stroke-width=".7"/><path d="M5.500 10.500h5v2.500h-5z" fill="#fde6a4"/><path d="M5.500 7.500l1.200-2.500 1.300 2.500 1.300-2.500 1.200 2.500" stroke="#e2a444" stroke-width=".7" fill="none"/><rect x="5.500" y="11.800" width="5" height="3.200" rx="1" fill="#8c96a8"/><path d="M5.500 13.200h5" stroke="#555" stroke-width=".5"/></svg>
<div class="t" style="left:61px;top:38px">Ambient Light - Light</div>
<svg style="left:39px;top:55px" width="16" height="16" viewBox="0 0 16 16"><circle cx="8" cy="6.200" r="5.700" fill="#fde6a4" stroke="#e2a444" stroke-width=".7"/><path d="M5.500 10.500h5v2.500h-5z" fill="#fde6a4"/><path d="M5.500 7.500l1.200-2.500 1.300 2.500 1.300-2.500 1.200 2.500" stroke="#e2a444" stroke-width=".7" fill="none"/><rect x="5.500" y="11.800" width="5" height="3.200" rx="1" fill="#8c96a8"/><path d="M5.500 13.200h5" stroke="#555" stroke-width=".5"/></svg>
<div class="t" style="left:61px;top:56px">Light 1 - Light</div>
<div class="exp plus" style="left:26px;top:76px"></div>
<svg style="left:39px;top:73px" width="16" height="16" viewBox="0 0 16 16"><rect x=".5" y=".5" width="15" height="15" fill="#ffffff" stroke="#2a7ed0"/><rect x=".5" y=".5" width="15" height="3" fill="#3a90e4"/><rect x="2" y="5" width="12" height="9" fill="url(#rb)"/><rect x="2" y="5" width="12" height="9" fill="url(#wb)"/></svg>
<div class="t" style="left:61px;top:74px">Rendering Pipeline - Rendering</div>
<div class="exp plus" style="left:26px;top:94px"></div>
<svg style="left:39px;top:91px" width="16" height="16" viewBox="0 0 16 16"><rect x=".5" y=".5" width="15" height="15" fill="#ffffff" stroke="#2a7ed0"/><rect x=".5" y=".5" width="15" height="3" fill="#3a90e4"/><rect x="2" y="5" width="12" height="9" fill="url(#rb)"/><rect x="2" y="5" width="12" height="9" fill="url(#wb)"/></svg>
<div class="t" style="left:61px;top:92px">Rendering Pipeline 2 - Rendering</div>
<svg style="left:39px;top:109px" width="16" height="16" viewBox="0 0 16 16"><path d="M8 1v3" stroke="#ccc" stroke-width="1.300"/><path d="M3.500 4h9c2 0 3 2 3.300 5 .3 3 0 5-1.300 5-1.500 0-2-2.500-3.500-2.500h-6c-1.500 0-2 2.500-3.500 2.500-1.300 0-1.600-2-1.300-5 .3-3 1.300-5 3.300-5z" fill="#e8e8e8" stroke="#9a9a9a" stroke-width=".6"/><path d="M3 8h3M4.500 6.500v3" stroke="#30a030" stroke-width="1.200"/><circle cx="11" cy="7" r=".9" fill="#e03030"/><circle cx="12.500" cy="8.700" r=".9" fill="#3060e0"/><circle cx="7" cy="8" r=".6" fill="#888"/><circle cx="9" cy="8" r=".6" fill="#888"/></svg>
<div class="t" style="left:61px;top:110px">Game Mode - GameMode</div>
<svg style="left:39px;top:127px" width="16" height="16" viewBox="0 0 16 16"><circle cx="8" cy="6.200" r="5.700" fill="#808080" stroke="#686868" stroke-width=".7"/><path d="M5.500 10.500h5v2.500h-5z" fill="#808080"/><path d="M5.500 7.500l1.200-2.500 1.300 2.500 1.300-2.500 1.200 2.500" stroke="#686868" stroke-width=".7" fill="none"/><rect x="5.500" y="11.800" width="5" height="3.200" rx="1" fill="#6a6a6a"/><path d="M5.500 13.200h5" stroke="#555" stroke-width=".5"/></svg>
<div class="t" style="left:61px;top:128px;color:#7c7c7c">Light 2 - Light</div>
<svg style="left:39px;top:145px" width="16" height="16" viewBox="0 0 16 16"><rect x=".5" y=".5" width="14" height="14" fill="#5ab8f0"/><path d="M.5 9l4-1 3 2 3-2 4.500 1v5.500h-14.500z" fill="#e8e0a0"/><path d="M.5 4h14M.5 8h14M.5 12h14M4 .5v14M8 .5v14M12 .5v14" stroke="#a8dcf8" stroke-width=".6"/><path d="M7.500 5v8" stroke="#111" stroke-width="1.100"/><path d="M7.500 7l2.500 4h-5z" fill="#111"/><rect x="10.500" y="2.500" width="3" height="2.500" fill="#e82020"/></svg>
<div class="t" style="left:61px;top:146px"></div>
</div>
<div class="sb" style="left:176px;top:44px;width:17px;height:148px;background:#323232"><div class="thumb" style="left:0;top:17px;width:17px;height:50px"></div><svg style="left:4px;top:4px" width="9" height="9" viewBox="0 0 9 9"><path d="M1 6.500l3.500-3.500 3.500 3.500" stroke="#bdbdbd" stroke-width="1.100" fill="none"/></svg><svg style="left:4px;top:137px" width="9" height="9" viewBox="0 0 9 9"><path d="M1 2.500l3.500 3.500 3.500-3.500" stroke="#bdbdbd" stroke-width="1.100" fill="none"/></svg></div>
<div class="sb" style="left:0;top:192px;width:193px;height:15px;background:#323232"><div class="thumb" style="left:16px;top:0;width:71px;height:15px"></div><svg style="left:3px;top:3px" width="9" height="9" viewBox="0 0 9 9"><path d="M6 1l-3.500 3.500 3.500 3.500" stroke="#bdbdbd" stroke-width="1.100" fill="none"/></svg><svg style="left:163px;top:3px" width="9" height="9" viewBox="0 0 9 9"><path d="M3 1l3.500 3.500-3.500 3.500" stroke="#bdbdbd" stroke-width="1.100" fill="none"/></svg></div>
</div>
<div class="panel" style="left:825px;top:275px;width:195px;height:426px">
<div class="ptitle" style="height:18px"><div class="t" style="top:2px">Настройки</div><svg style="left:143px;top:0" width="46" height="19" viewBox="0 0 46 19"><path d="M4 8h7.500l-3.750 4z" fill="#9c9c9c"/><path d="M21.500 4.500h4v6h-4zM24.500 4.500v6M19.500 10.500h8M23.500 10.500v4" stroke="#a8a8a8" stroke-width="1" fill="none"/><path d="M35.500 5.500l8 8M43.500 5.500l-8 8" stroke="#b4b4b4" stroke-width="1.700"/></svg></div>
<div class="t s12" style="left:6px;top:25px;font-weight:bold;color:#f4f4f4">Scene</div>
<div class="t s12" style="left:6px;top:45px;color:#f4f4f4">Scene</div>
<svg style="left:172px;top:23px" width="16" height="16" viewBox="0 0 16 16"><path d="M4.500 .5l4.500 4-4 4.500-4.500-4z" fill="#e8c83a" stroke="#a88a18" stroke-width=".6"/><path d="M8 6.500h2.500v5.500h2" stroke="#9a9a9a" fill="none"/><path d="M12 4.500l2.500 2.200-2.200 2.500-2.500-2.200z" fill="#3cc0f0" stroke="#1c80b0" stroke-width=".5"/><path d="M13 10l2.500 2.200-2.200 2.500-2.500-2.200z" fill="#f070c0" stroke="#b03888" stroke-width=".5"/></svg>
<div class="a" style="left:3px;top:65px;width:20px;height:21px;background:#515151"></div>
<svg style="left:5px;top:67px" width="16" height="16" viewBox="0 0 16 16"><rect x=".5" y="2.500" width="14" height="11.500" fill="#f4f8fc" stroke="#5a98d8"/><rect x=".5" y="2.500" width="14" height="2.500" fill="#4a90e0"/><path d="M2 7.500h1.500M2 10h1.500M2 12h1.500" stroke="#e04030" stroke-width="1.200"/><path d="M5 7.500h7M5 10h7M5 12h7" stroke="#9ab" stroke-width="1"/><path d="M5 3l5-2.500 5.500 2 .5 4-4 2-3-1.500-2 .5z" fill="#e8b078" stroke="#a86830" stroke-width=".6"/></svg>
<svg style="left:25px;top:67px" width="16" height="16" viewBox="0 0 16 16"><path d="M9 .5l-6 8h4l-2.500 7 8-9.500h-4.500l4-5.500z" fill="#f8d820" stroke="#b89000" stroke-width=".6"/></svg>
<div class="a" style="left:2px;top:89px;width:174px;height:17px;background:#282828"></div><div class="t" style="left:6px;top:91px;color:#b8b8b8">Компонент</div>
<div class="a" style="left:2px;top:201px;width:174px;height:17px;background:#282828"></div><div class="t" style="left:6px;top:203px;color:#b8b8b8">Сцена</div>
<div class="a" style="left:80px;top:106px;width:6px;height:95px;background:#404040"></div>
<div class="a" style="left:80px;top:218px;width:6px;height:158px;background:#404040"></div>
<div class="t" style="left:21px;top:112px">Включено</div>
<div class="a" style="left:126px;top:112px;width:13px;height:13px;background:#fff;border:1px solid #444"></div><svg style="left:127px;top:113px" width="11" height="11" viewBox="0 0 11 11"><path d="M1.500 5.500l3 3 5-6" stroke="#222" stroke-width="2" fill="none"/></svg>
<div class="t" style="left:21px;top:135px">Name</div>
<div class="tb" style="left:125px;top:134px;width:49px;height:18px"></div><div class="t" style="left:130px;top:136px"></div>
<div class="t" style="left:21px;top:158px">Screen L...</div>
<div class="box" style="left:100px;top:157px;width:22px;height:17px"></div>
<div class="box" style="left:125px;top:157px;width:49px;height:18px;border-color:#6a6a6a"></div><div class="t" style="left:130px;top:159px">Auto</div><svg style="left:160px;top:164px" width="9" height="5" viewBox="0 0 9 5"><path d="M0 0h9l-4.500 5z" fill="#b4b4b4"/></svg>
<div class="t" style="left:21px;top:181px">Network ...</div>
<div class="box" style="left:100px;top:180px;width:22px;height:17px"></div>
<div class="box" style="left:125px;top:180px;width:49px;height:18px;border-color:#6a6a6a"></div><div class="t" style="left:130px;top:182px">True</div><svg style="left:160px;top:187px" width="9" height="5" viewBox="0 0 9 5"><path d="M0 0h9l-4.500 5z" fill="#b4b4b4"/></svg>
<div class="t" style="left:21px;top:224px">Renderin...</div>
<div class="a" style="left:90px;top:228px;width:5px;height:5px;border-radius:3px;background:#8a8a8a"></div>
<div class="box" style="left:100px;top:223px;width:22px;height:17px"></div>
<svg style="left:108px;top:227px" width="7" height="9" viewBox="0 0 7 9"><path d="M.5 0l6 4.500-6 4.500z" fill="#c8c8c8"/></svg>
<div class="t" style="left:129px;top:226px;width:41px;overflow:hidden">Rendering</div>
<div class="t" style="left:21px;top:247px">Backgro...</div>
<div class="box" style="left:100px;top:246px;width:22px;height:17px"></div>
<div class="tb" style="left:125px;top:246px;width:28px;height:18px"></div><div class="t" style="left:130px;top:248px">1 1</div>
<div class="a" style="left:154px;top:245px;width:19px;height:18px;background:#fff;border:1px solid #c8c8c8"></div>
<div class="a" style="left:4px;top:247px;width:14px;height:14px;border:1px solid #5c5c5c"></div><div class="a" style="left:8px;top:253.5px;width:6px;height:1px;background:#c0c0c0"></div><div class="a" style="left:10.5px;top:251px;width:1px;height:6px;background:#c0c0c0"></div>
<div class="t" style="left:21px;top:270px">Backgro...</div>
<div class="box" style="left:100px;top:269px;width:22px;height:17px"></div>
<div class="tb" style="left:125px;top:269px;width:48px;height:18px"></div><div class="t" style="left:130px;top:271px">1</div>
<div class="t" style="left:21px;top:293px">UI Screen</div>
<div class="box" style="left:100px;top:292px;width:22px;height:17px"></div>
<div class="t" style="left:129px;top:295px;width:41px;overflow:hidden">(Null)</div>
<div class="t" style="left:21px;top:316px">Mode</div>
<div class="box" style="left:100px;top:315px;width:22px;height:17px"></div>
<div class="box" style="left:125px;top:315px;width:49px;height:18px;border-color:#6a6a6a"></div><div class="t" style="left:130px;top:317px">3D</div><svg style="left:160px;top:322px" width="9" height="5" viewBox="0 0 9 5"><path d="M0 0h9l-4.500 5z" fill="#b4b4b4"/></svg>
<div class="t" style="left:21px;top:339px">Screen ...</div>
<div class="box" style="left:100px;top:338px;width:22px;height:17px"></div>
<div class="box" style="left:125px;top:338px;width:49px;height:18px;border-color:#6a6a6a"></div><div class="t" style="left:130px;top:340px">Un...</div><svg style="left:160px;top:345px" width="9" height="5" viewBox="0 0 9 5"><path d="M0 0h9l-4.500 5z" fill="#b4b4b4"/></svg>
<div class="t" style="left:21px;top:362px">Camera ...</div>
<div class="a" style="left:90px;top:366px;width:5px;height:5px;border-radius:3px;background:#8a8a8a"></div>
<div class="box" style="left:100px;top:361px;width:22px;height:17px"></div>
<svg style="left:108px;top:365px" width="7" height="9" viewBox="0 0 7 9"><path d="M.5 0l6 4.500-6 4.500z" fill="#c8c8c8"/></svg>
<div class="t" style="left:129px;top:364px;width:44px;overflow:hidden">Camera <span style="color:#5a7ad0">|</span></div>
<div class="a" style="left:0px;top:376px;width:180px;height:6px;background:#363636"></div>
<div class="sb" style="left:177px;top:89px;width:15px;height:287px;background:#363636"><div class="thumb" style="left:0;top:17px;width:15px;height:42px"></div><svg style="left:3px;top:4px" width="9" height="9" viewBox="0 0 9 9"><path d="M1 6.500l3.500-3.500 3.500 3.500" stroke="#bdbdbd" stroke-width="1.100" fill="none"/></svg><svg style="left:3px;top:275px" width="9" height="9" viewBox="0 0 9 9"><path d="M1 2.500l3.500 3.500 3.500-3.500" stroke="#bdbdbd" stroke-width="1.100" fill="none"/></svg></div>
<div class="box" style="left:7px;top:383px;width:93px;height:27px;border-color:#5e5e5e"></div><div class="t" style="left:7px;top:389px;width:93px;text-align:center;font-size:12px">Info</div>
</div>
</body></html>
